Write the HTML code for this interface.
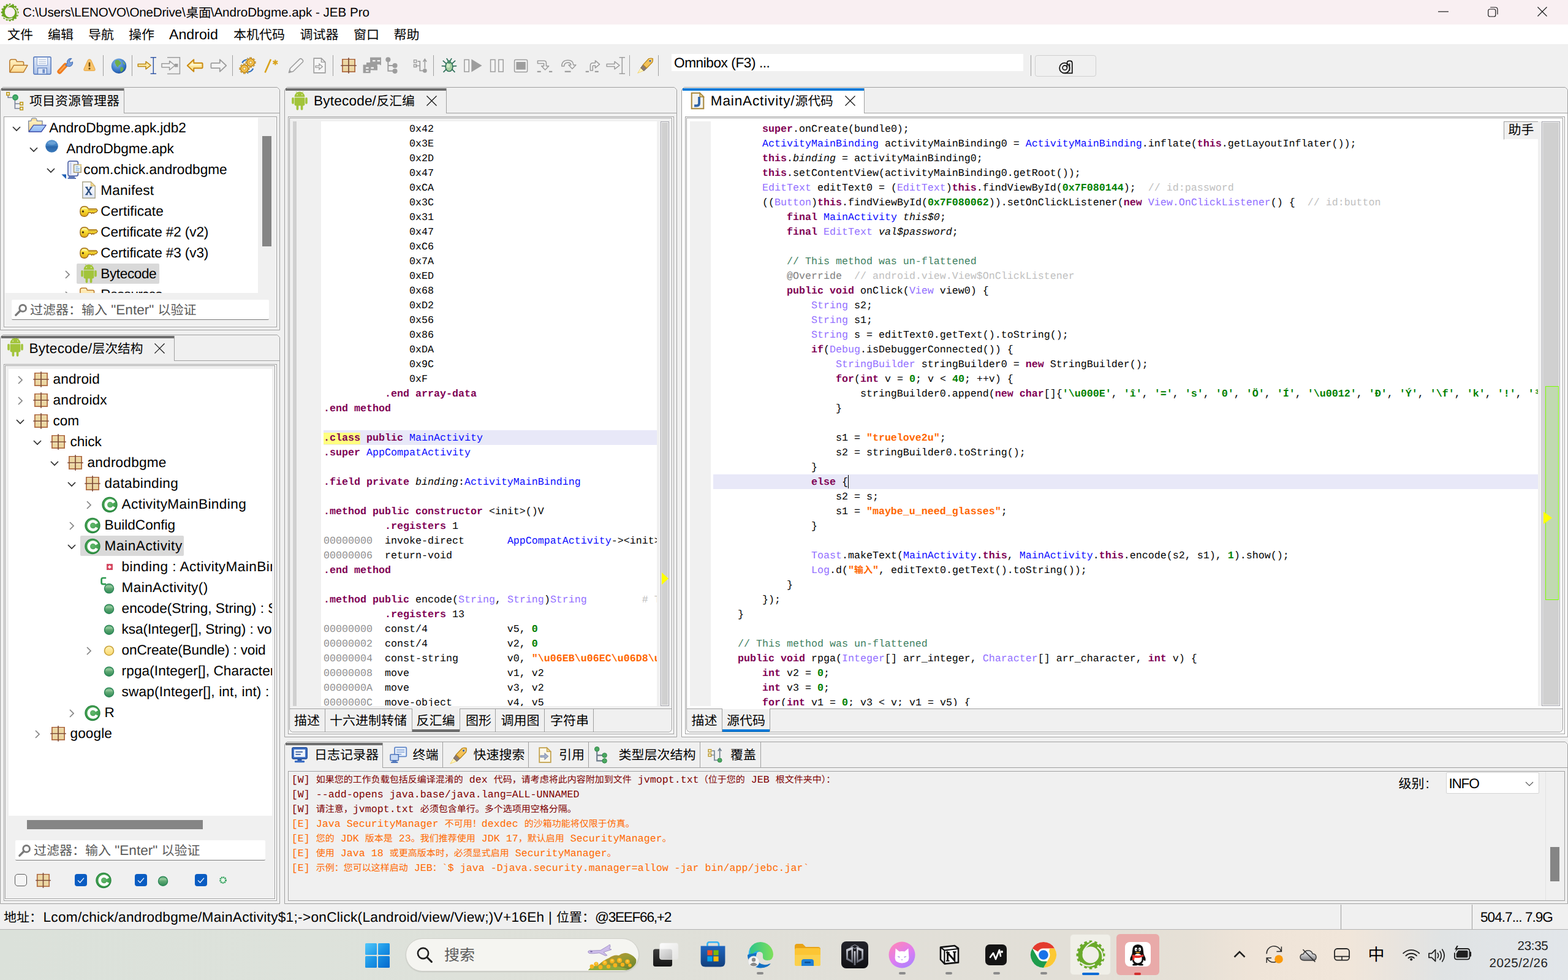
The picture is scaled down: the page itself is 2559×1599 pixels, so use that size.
<!DOCTYPE html>
<html lang="zh"><head><meta charset="utf-8"><title>JEB Pro</title>
<style>
*{box-sizing:border-box;margin:0;padding:0}
html,body{width:2559px;height:1599px;overflow:hidden;background:#f0f0f0}
body{position:relative;text-rendering:geometricPrecision;font-family:"Liberation Sans",sans-serif;font-size:22.6px;color:#000}
div{position:absolute}
svg{position:absolute;overflow:visible}
.u{white-space:nowrap;font-family:"Liberation Sans","Noto Sans CJK SC",sans-serif}
.cj{font-family:"Liberation Sans","Noto Sans CJK SC",sans-serif}
.cj15{font-size:15px;font-family:"Liberation Mono","Noto Sans CJK SC",monospace}
.code{font-family:"Liberation Mono","Noto Sans CJK SC",monospace;font-size:16.67px;line-height:24px;white-space:pre;color:#000;overflow:hidden}
.code div{position:absolute;left:0;height:24px;white-space:pre}
.code b{font-weight:bold}
.k{color:#7f0055;font-weight:bold}
.c{color:#0c0cff}
.t{color:#9370ff}
.n{color:#008000;font-weight:bold}
.s{color:#ff6600;font-weight:bold}
.cm{color:#3f7f5f}
.g{color:#808080}
.lg{color:#c0c0c0}
.a{color:#909090}
.it{font-style:italic}
.w{color:#800000}
.e{color:#ff6a00}

</style></head>
<body>
<!-- title bar -->
<div style="left:0px;top:0px;width:2559px;height:40px;background:#f9eff2"></div>
<svg style="left:1.8px;top:5.8px" width="28.4" height="28.4" viewBox="0 0 16 16" ><rect x="7.2" y="-0.15" width="1.6" height="1.9" fill="#6ba51f" transform="rotate(0.0 8 8)"/><rect x="7.2" y="-0.15" width="1.6" height="1.9" fill="#6ba51f" transform="rotate(22.5 8 8)"/><rect x="7.2" y="-0.15" width="1.6" height="1.9" fill="#6ba51f" transform="rotate(45.0 8 8)"/><rect x="7.2" y="-0.15" width="1.6" height="1.9" fill="#6ba51f" transform="rotate(67.5 8 8)"/><rect x="7.2" y="-0.15" width="1.6" height="1.9" fill="#6ba51f" transform="rotate(90.0 8 8)"/><rect x="7.2" y="-0.15" width="1.6" height="1.9" fill="#6ba51f" transform="rotate(112.5 8 8)"/><rect x="7.2" y="-0.15" width="1.6" height="1.9" fill="#6ba51f" transform="rotate(135.0 8 8)"/><rect x="7.2" y="-0.15" width="1.6" height="1.9" fill="#6ba51f" transform="rotate(157.5 8 8)"/><rect x="7.2" y="-0.15" width="1.6" height="1.9" fill="#6ba51f" transform="rotate(180.0 8 8)"/><rect x="7.2" y="-0.15" width="1.6" height="1.9" fill="#6ba51f" transform="rotate(202.5 8 8)"/><rect x="7.2" y="-0.15" width="1.6" height="1.9" fill="#6ba51f" transform="rotate(225.0 8 8)"/><rect x="7.2" y="-0.15" width="1.6" height="1.9" fill="#6ba51f" transform="rotate(247.5 8 8)"/><rect x="7.2" y="-0.15" width="1.6" height="1.9" fill="#6ba51f" transform="rotate(270.0 8 8)"/><rect x="7.2" y="-0.15" width="1.6" height="1.9" fill="#6ba51f" transform="rotate(292.5 8 8)"/><rect x="7.2" y="-0.15" width="1.6" height="1.9" fill="#6ba51f" transform="rotate(315.0 8 8)"/><rect x="7.2" y="-0.15" width="1.6" height="1.9" fill="#6ba51f" transform="rotate(337.5 8 8)"/><circle cx="8" cy="8" r="5.95" fill="none" stroke="#6ba51f" stroke-width="2.5"/><path d="M9.6 0.6 Q5.2 2.4 3.6 6.6 M14.6 10.6 Q15.4 6 11.8 3.6 M2.4 12.4 Q6.2 15.6 10.4 13.2" fill="none" stroke="#f9eff2" stroke-width="0.75"/></svg>
<div class="u" style="left:37px;top:6.399999999999999px;height:30px;line-height:30px;font-size:20.6px;color:#000;letter-spacing:-0.186px;">C:\Users\LENOVO\OneDrive\</div>
<div class="u" style="left:303.4px;top:6.0px;height:30px;line-height:30px;font-size:22.6px;color:#000;"><span class="cj" style="font-size:20.6px">桌面</span></div>
<div class="u" style="left:343.7px;top:6.399999999999999px;height:30px;line-height:30px;font-size:20.6px;color:#000;letter-spacing:-0.024px;">\AndroDbgme.apk - JEB Pro</div>
<svg style="left:2347px;top:18px" width="17" height="2" viewBox="0 0 17 2" ><path d="M0 1 H17" stroke="#1a1a1a" stroke-width="1.2"/></svg>
<svg style="left:2428px;top:11px" width="17" height="17" viewBox="0 0 17 17" ><rect x="0.8" y="4" width="12" height="12" rx="2.6" fill="none" stroke="#1a1a1a" stroke-width="1.2"/><path d="M4.2 1 H12.4 Q16 1 16 4.6 V12.6" fill="none" stroke="#1a1a1a" stroke-width="1.2"/></svg>
<svg style="left:2509px;top:11px" width="16" height="16" viewBox="0 0 16 16" ><path d="M0.5 0.5 L15.5 15.5 M15.5 0.5 L0.5 15.5" stroke="#1a1a1a" stroke-width="1.2"/></svg>
<!-- menu bar -->
<div style="left:0px;top:40px;width:2559px;height:32px;background:#fff"></div>
<div class="u" style="left:12px;top:41.0px;height:30px;line-height:30px;font-size:23.2px;color:#000;"><span class="cj" style="font-size:21px">文件</span></div>
<div class="u" style="left:78px;top:41.0px;height:30px;line-height:30px;font-size:23.2px;color:#000;"><span class="cj" style="font-size:21px">编辑</span></div>
<div class="u" style="left:144px;top:41.0px;height:30px;line-height:30px;font-size:23.2px;color:#000;"><span class="cj" style="font-size:21px">导航</span></div>
<div class="u" style="left:210px;top:41.0px;height:30px;line-height:30px;font-size:23.2px;color:#000;"><span class="cj" style="font-size:21px">操作</span></div>
<div class="u" style="left:276px;top:41.0px;height:30px;line-height:30px;font-size:23.2px;color:#000;">Android</div>
<div class="u" style="left:381px;top:41.0px;height:30px;line-height:30px;font-size:23.2px;color:#000;"><span class="cj" style="font-size:21px">本机代码</span></div>
<div class="u" style="left:489.5px;top:41.0px;height:30px;line-height:30px;font-size:23.2px;color:#000;"><span class="cj" style="font-size:21px">调试器</span></div>
<div class="u" style="left:577px;top:41.0px;height:30px;line-height:30px;font-size:23.2px;color:#000;"><span class="cj" style="font-size:21px">窗口</span></div>
<div class="u" style="left:642.5px;top:41.0px;height:30px;line-height:30px;font-size:23.2px;color:#000;"><span class="cj" style="font-size:21px">帮助</span></div>
<!-- tool bar -->
<div style="left:0px;top:72px;width:2559px;height:70px;background:#f0f0f0"></div>
<div style="left:168px;top:90px;width:1px;height:34px;background:#a0a0a0"></div>
<div style="left:215px;top:90px;width:1px;height:34px;background:#a0a0a0"></div>
<div style="left:379px;top:90px;width:1px;height:34px;background:#a0a0a0"></div>
<div style="left:543px;top:90px;width:1px;height:34px;background:#a0a0a0"></div>
<div style="left:707px;top:90px;width:1px;height:34px;background:#a0a0a0"></div>
<div style="left:1027px;top:90px;width:1px;height:34px;background:#a0a0a0"></div>
<div style="left:1074px;top:90px;width:1px;height:34px;background:#a0a0a0"></div>
<div style="left:1682px;top:90px;width:1px;height:34px;background:#a0a0a0"></div>
<svg style="left:14.5px;top:96.0px" width="31.0" height="23.0" viewBox="0 0 31 23" ><defs><linearGradient id="gft" x1="0" y1="0" x2="0" y2="1"><stop offset="0" stop-color="#fff1c4"/><stop offset="1" stop-color="#fbd485"/></linearGradient></defs><path d="M0.8 21.6 V4.4 Q0.8 1 4.2 1 H9.6 Q11.6 1 12 3.4 L12.4 4.6 H21.4 Q23.6 4.6 23.6 6.8 V10" fill="url(#gft)" stroke="#b9782a" stroke-width="1.5"/><path d="M1 22 L7.6 10.4 H30 L23.4 22 Z" fill="url(#gft)" stroke="#b9782a" stroke-width="1.5" stroke-linejoin="round"/></svg>
<svg style="left:54px;top:91.5px" width="30" height="30" viewBox="0 0 30 30" ><defs><linearGradient id="gsv" x1="0" y1="0" x2="0" y2="1"><stop offset="0" stop-color="#e4ecf8"/><stop offset="1" stop-color="#a9c0e8"/></linearGradient></defs><rect x="0.9" y="0.9" width="28.2" height="28.2" rx="2" fill="url(#gsv)" stroke="#5d7fbf" stroke-width="1.6"/><rect x="6.4" y="1.6" width="17.2" height="13" fill="#f4f7fc" stroke="#8fa8d6" stroke-width="1.1"/><path d="M9 5.4 H21 M9 8.6 H21 M9 11.6 H21" stroke="#b9c6dc" stroke-width="1.1"/><rect x="7.6" y="19" width="14.8" height="10" fill="#dbe5f6" stroke="#5d7fbf" stroke-width="1.2"/><rect x="15.4" y="20.8" width="3.8" height="6.6" fill="#6f8fcb"/></svg>
<svg style="left:93px;top:93px" width="28" height="28" viewBox="0 0 16 16" ><path d="M2.4 13.6 L7.8 7.8" stroke="#f07c1e" stroke-width="4.4" stroke-linecap="round"/><path d="M2.6 13.4 L7.6 8" stroke="#f9a958" stroke-width="1.2" stroke-linecap="round"/><path d="M8 7.6 L9.6 6 A3.6 3.6 0 0 1 13.6 1.4 L11.4 3.8 L12.6 5.4 L14.6 4.6 A3.6 3.6 0 0 1 9.8 8.6 Z" fill="#7ba1dc" stroke="#4b74b8" stroke-width="0.6"/></svg>
<svg style="left:132px;top:93px" width="28" height="28" viewBox="0 0 16 16" ><path d="M8 2.2 Q9 2.2 9.6 3.4 L13 11 Q13.6 12.8 11.8 12.8 H4.2 Q2.4 12.8 3 11 L6.4 3.4 Q7 2.2 8 2.2 Z" fill="#f9c56c" stroke="#eaae52" stroke-width="0.8"/><path d="M8 5 V9" stroke="#6a4a10" stroke-width="1.5"/><circle cx="8" cy="10.8" r="0.9" fill="#6a4a10"/></svg>
<svg style="left:179.5px;top:93px" width="28" height="28" viewBox="0 0 16 16" ><defs><radialGradient id="gg" cx="0.4" cy="0.3" r="0.8"><stop offset="0" stop-color="#8fc0f0"/><stop offset="0.7" stop-color="#2f6fc0"/><stop offset="1" stop-color="#1a3f86"/></radialGradient></defs><circle cx="8" cy="8.4" r="7" fill="url(#gg)"/><path d="M5 3 Q8 2 9 4.4 Q10.8 5.2 9.4 7 Q7.6 7.6 7.4 9.4 Q5.4 9 5 6.8 Q3.6 5.2 5 3 Z" fill="#6fae4a"/><path d="M9.6 9.4 Q12 9 12.4 10.8 Q11.6 13.4 9.8 14 Q8.8 12 9.6 9.4 Z" fill="#6fae4a"/><path d="M11.6 4 Q13.8 5.4 13.8 7.4 Q12.2 7 11.6 4 Z" fill="#7fb85a"/></svg>
<svg style="left:224px;top:92.5px" width="32" height="28" viewBox="0 0 32 28" ><path d="M1.2 11.6 H14 V7.4 L22 13.6 L14 19.8 V15.6 H1.2 Z" fill="#fdeaa6" stroke="#bd8a14" stroke-width="1.5" stroke-linejoin="round"/><path d="M21.6 0.8 H31 M26.3 0.8 V27.2 M21.6 27.2 H31" stroke="#3458a6" stroke-width="1.5" fill="none"/></svg>
<svg style="left:262.5px;top:92.6px" width="32" height="29" viewBox="0 0 32 29" ><path d="M10 0.8 H30.4 V27.6 H10" fill="none" stroke="#9d9d9d" stroke-width="1.5"/><path d="M1 10.8 H13.6 V6.4 L22.4 13.8 L13.6 21.2 V16.8 H1 Z" fill="#f2f2f2" stroke="#9d9d9d" stroke-width="1.5" stroke-linejoin="round"/><rect x="22" y="11" width="5.4" height="5.4" fill="#9d9d9d"/></svg>
<svg style="left:304px;top:93px" width="28" height="28" viewBox="0 0 16 16" ><path d="M1 8 L7 2.4 V5.6 H14.4 Q15.2 5.6 15.2 6.6 V9.4 Q15.2 10.4 14.4 10.4 H7 V13.6 Z" fill="#fde59a" stroke="#c98a12" stroke-width="1.1" stroke-linejoin="round"/><path d="M3 8 L6.4 4.8 V6.6 H14 V8 Z" fill="#fff6d0"/></svg>
<svg style="left:343px;top:93px" width="28" height="28" viewBox="0 0 16 16" ><path d="M15 8 L9 2.4 V5.6 H1.6 Q0.8 5.6 0.8 6.6 V9.4 Q0.8 10.4 1.6 10.4 H9 V13.6 Z" fill="#f3f3f3" stroke="#9d9d9d" stroke-width="1" stroke-linejoin="round"/></svg>
<svg style="left:390px;top:93px" width="28" height="28" viewBox="0 0 16 16" ><path d="M2.4 5.2 A6.4 6.4 0 0 1 8 1.8 L7.6 0.6 L10.4 2.4 L7.8 4.2 L7.8 3 A5 5 0 0 0 3.6 5.8 Z" fill="#2f6fc0"/><path d="M13.8 11 A6.4 6.4 0 0 1 8.4 14.6 L8.8 15.8 L6 14 L8.6 12.2 L8.6 13.4 A5 5 0 0 0 12.6 10.4 Z" fill="#2f6fc0"/><rect x="10.0" y="0.49999999999999956" width="1.8" height="2.2" fill="#f6c04a" stroke="#a9781a" stroke-width="0.4" transform="rotate(0 10.9 5.1)"/><rect x="10.0" y="0.49999999999999956" width="1.8" height="2.2" fill="#f6c04a" stroke="#a9781a" stroke-width="0.4" transform="rotate(45 10.9 5.1)"/><rect x="10.0" y="0.49999999999999956" width="1.8" height="2.2" fill="#f6c04a" stroke="#a9781a" stroke-width="0.4" transform="rotate(90 10.9 5.1)"/><rect x="10.0" y="0.49999999999999956" width="1.8" height="2.2" fill="#f6c04a" stroke="#a9781a" stroke-width="0.4" transform="rotate(135 10.9 5.1)"/><rect x="10.0" y="0.49999999999999956" width="1.8" height="2.2" fill="#f6c04a" stroke="#a9781a" stroke-width="0.4" transform="rotate(180 10.9 5.1)"/><rect x="10.0" y="0.49999999999999956" width="1.8" height="2.2" fill="#f6c04a" stroke="#a9781a" stroke-width="0.4" transform="rotate(225 10.9 5.1)"/><rect x="10.0" y="0.49999999999999956" width="1.8" height="2.2" fill="#f6c04a" stroke="#a9781a" stroke-width="0.4" transform="rotate(270 10.9 5.1)"/><rect x="10.0" y="0.49999999999999956" width="1.8" height="2.2" fill="#f6c04a" stroke="#a9781a" stroke-width="0.4" transform="rotate(315 10.9 5.1)"/><circle cx="10.9" cy="5.1" r="3.5" fill="#f6c04a" stroke="#a9781a" stroke-width="0.6"/><circle cx="10.9" cy="5.1" r="1.26" fill="#fff4c8" stroke="#a9781a" stroke-width="0.4"/><rect x="4.199999999999999" y="6.300000000000001" width="1.8" height="2.2" fill="#f6c04a" stroke="#a9781a" stroke-width="0.4" transform="rotate(0 5.1 10.9)"/><rect x="4.199999999999999" y="6.300000000000001" width="1.8" height="2.2" fill="#f6c04a" stroke="#a9781a" stroke-width="0.4" transform="rotate(45 5.1 10.9)"/><rect x="4.199999999999999" y="6.300000000000001" width="1.8" height="2.2" fill="#f6c04a" stroke="#a9781a" stroke-width="0.4" transform="rotate(90 5.1 10.9)"/><rect x="4.199999999999999" y="6.300000000000001" width="1.8" height="2.2" fill="#f6c04a" stroke="#a9781a" stroke-width="0.4" transform="rotate(135 5.1 10.9)"/><rect x="4.199999999999999" y="6.300000000000001" width="1.8" height="2.2" fill="#f6c04a" stroke="#a9781a" stroke-width="0.4" transform="rotate(180 5.1 10.9)"/><rect x="4.199999999999999" y="6.300000000000001" width="1.8" height="2.2" fill="#f6c04a" stroke="#a9781a" stroke-width="0.4" transform="rotate(225 5.1 10.9)"/><rect x="4.199999999999999" y="6.300000000000001" width="1.8" height="2.2" fill="#f6c04a" stroke="#a9781a" stroke-width="0.4" transform="rotate(270 5.1 10.9)"/><rect x="4.199999999999999" y="6.300000000000001" width="1.8" height="2.2" fill="#f6c04a" stroke="#a9781a" stroke-width="0.4" transform="rotate(315 5.1 10.9)"/><circle cx="5.1" cy="10.9" r="3.5" fill="#f6c04a" stroke="#a9781a" stroke-width="0.6"/><circle cx="5.1" cy="10.9" r="1.26" fill="#fff4c8" stroke="#a9781a" stroke-width="0.4"/></svg>
<svg style="left:429px;top:93px" width="28" height="28" viewBox="0 0 16 16" ><path d="M2 14.6 L7.4 2.2" stroke="#d9a21a" stroke-width="1.5"/><path d="M11.6 2.6 V7.6 M9.4 3.8 L13.8 6.4 M13.8 3.8 L9.4 6.4" stroke="#d9a21a" stroke-width="1.2"/></svg>
<svg style="left:468.5px;top:93px" width="28" height="28" viewBox="0 0 16 16" ><path d="M1.4 14.6 L2.6 10.6 L11.6 1.8 Q12.4 1.2 13.2 1.8 L14.4 3 Q15 3.8 14.4 4.6 L5.4 13.4 Z" fill="#f4f4f4" stroke="#9d9d9d" stroke-width="0.9" stroke-linejoin="round"/><path d="M1.4 14.6 L2.2 12 L4 13.8 Z" fill="#9d9d9d"/></svg>
<svg style="left:507px;top:93px" width="28" height="28" viewBox="0 0 16 16" ><path d="M3 1.2 H10 L13.6 4.8 V14.8 H3 Z" fill="#f6f6f6" stroke="#9d9d9d" stroke-width="0.9"/><path d="M10 1.2 V4.8 H13.6" fill="none" stroke="#9d9d9d" stroke-width="0.8"/><path d="M4.6 8.2 H8 V6.4 L11 9 L8 11.6 V9.8 H4.6 Z" fill="#f6f6f6" stroke="#9d9d9d" stroke-width="0.8"/></svg>
<svg style="left:555.5px;top:94px" width="26" height="26" viewBox="0 0 26 26" ><rect x="2.9" y="2.9" width="20.2" height="20.2" fill="#ecd7a2" stroke="#b06e46" stroke-width="1.8"/><path d="M4.4 4.4 H21.6 M4.4 14.6 H21.6" stroke="#f6e8c0" stroke-width="1.2"/><path d="M13 0.2 V25.8 M0.2 13 H25.8" stroke="#7e4c38" stroke-width="1.7"/></svg>
<svg style="left:591.5px;top:92px" width="31" height="28" viewBox="0 0 31 28" ><g fill="#9d9d9d"><rect x="12" y="1.6" width="18" height="12.6"/><rect x="6" y="10" width="18" height="12.6"/><rect x="0.6" y="13.6" width="12" height="13.6"/></g><g fill="#f0f0f0"><rect x="16" y="6" width="4.6" height="2.4"/><rect x="23.6" y="6" width="4.6" height="2.4"/><rect x="23.6" y="13.2" width="4.6" height="2.4"/><rect x="5" y="17.6" width="4.6" height="2.4"/><rect x="13.4" y="17.6" width="4.6" height="2.4"/><rect x="5" y="22.6" width="4.6" height="2.4"/><rect x="13.4" y="22.6" width="2.6" height="2.4"/></g></svg>
<svg style="left:626px;top:93px" width="28" height="28" viewBox="0 0 16 16" ><path d="M4.2 3 V13 H9 M4.2 8 H9" fill="none" stroke="#9d9d9d" stroke-width="1.1"/><circle cx="4.2" cy="2.4" r="2.3" fill="#9d9d9d"/><circle cx="10.6" cy="8" r="2.3" fill="#9d9d9d"/><circle cx="10.6" cy="13.2" r="2.3" fill="#9d9d9d"/></svg>
<svg style="left:672px;top:93px" width="28" height="28" viewBox="0 0 16 16" ><path d="M5.4 4 H7.6 V12.8 H11" fill="none" stroke="#9d9d9d" stroke-width="1"/><rect x="2" y="2.8" width="2.4" height="2.4" fill="#f0f0f0" stroke="#9d9d9d" stroke-width="0.8"/><rect x="2" y="7" width="2.4" height="2.4" fill="#f0f0f0" stroke="#9d9d9d" stroke-width="0.8"/><path d="M3.4 8.2 H7.6" stroke="#9d9d9d" stroke-width="0.8"/><path d="M12.2 2.8 V10.6 M10.6 4.4 L12.2 2 L13.8 4.4" fill="none" stroke="#9d9d9d" stroke-width="0.9"/><circle cx="12.2" cy="12.8" r="1.9" fill="#9d9d9d"/></svg>
<svg style="left:718.5px;top:93px" width="28" height="28" viewBox="0 0 16 16" ><path d="M8 8.6 L2.2 3.4 M8 8.6 L13.8 3.4 M8 8.6 L1 8.4 M8 8.6 L15 8.4 M8 8.6 L2.6 14.2 M8 8.6 L13.4 14.2 M8 5 L5.6 1.2 M8 5 L10.4 1.2" stroke="#2f6f5a" stroke-width="1"/><ellipse cx="8" cy="9" rx="3.4" ry="4.4" fill="#a6cfa0" stroke="#2f6f5a" stroke-width="0.9"/><ellipse cx="7.2" cy="7.8" rx="1.6" ry="2.2" fill="#d8efd0" opacity="0.8"/><circle cx="8" cy="4.6" r="1.6" fill="#4a8a6a"/></svg>
<svg style="left:757px;top:93px" width="30" height="28" viewBox="0 0 30 28" ><rect x="0.9" y="4.4" width="7.4" height="19.6" fill="#f4f4f4" stroke="#9d9d9d" stroke-width="1.5"/><path d="M12.4 3.6 L29.6 14 L12.4 24.4 Z" fill="#9d9d9d"/></svg>
<svg style="left:797px;top:93px" width="28" height="28" viewBox="0 0 28 28" ><rect x="3.6" y="4.4" width="7.4" height="19.6" fill="#f4f4f4" stroke="#9d9d9d" stroke-width="1.5"/><rect x="16.8" y="4.4" width="7.4" height="19.6" fill="#f4f4f4" stroke="#9d9d9d" stroke-width="1.5"/></svg>
<svg style="left:836px;top:93px" width="28" height="28" viewBox="0 0 28 28" ><rect x="3.6" y="4.4" width="21" height="20" rx="2" fill="#f4f4f4" stroke="#9d9d9d" stroke-width="1.5"/><rect x="6.4" y="8" width="15.4" height="12.6" fill="#9d9d9d"/></svg>
<svg style="left:875px;top:93px" width="28" height="28" viewBox="0 0 16 16" ><path d="M1.4 3.6 H7.4 Q9.4 3.6 9.4 5.6 V8.4 H11.8 L8.4 12 L5 8.4 H7.2 V6 H1.4 Z" fill="#f4f4f4" stroke="#9d9d9d" stroke-width="0.9" stroke-linejoin="round"/><path d="M1 13.6 H4.4 M12 13.6 H15" stroke="#9d9d9d" stroke-width="1.3"/></svg>
<svg style="left:914px;top:93px" width="28" height="28" viewBox="0 0 16 16" ><path d="M1.6 8.6 Q1.6 3 7.4 3 Q12.2 3 12.4 7.4 H14.8 L11.4 11 L8 7.4 H10.2 Q10 5.2 7.4 5.2 Q3.8 5.2 3.8 8.6 Z" fill="#f4f4f4" stroke="#9d9d9d" stroke-width="0.9" stroke-linejoin="round"/><path d="M4.4 13.6 H10" stroke="#9d9d9d" stroke-width="1.3"/></svg>
<svg style="left:953.5px;top:93px" width="28" height="28" viewBox="0 0 16 16" ><path d="M5.4 12.6 V8 Q5.4 5.6 7.8 5.6 H10 V3.4 L14 6.8 L10 10.2 V8 H8.2 Q7.6 8 7.6 8.6 V12.6 Z" fill="#f4f4f4" stroke="#9d9d9d" stroke-width="0.9" stroke-linejoin="round"/><path d="M1 13.6 H4 M9.6 13.6 H13" stroke="#9d9d9d" stroke-width="1.3"/></svg>
<svg style="left:989px;top:92.5px" width="32" height="28" viewBox="0 0 32 28" ><path d="M1.2 11.6 H14 V7.4 L22 13.6 L14 19.8 V15.6 H1.2 Z" fill="#f4f4f4" stroke="#9d9d9d" stroke-width="1.5" stroke-linejoin="round"/><path d="M21.6 0.8 H31 M26.3 0.8 V27.2 M21.6 27.2 H31" stroke="#9d9d9d" stroke-width="1.5" fill="none"/></svg>
<svg style="left:1038.5px;top:93px" width="28" height="28" viewBox="0 0 16 16" ><path d="M1 15 L4.4 9.6 L7.4 12.4 Z" fill="#fff6c0" stroke="#f0d060" stroke-width="0.5"/><path d="M3.8 10.2 L6 7.2 L9.4 10.4 L6.8 13 Z" fill="#8a7a72" stroke="#6a5a52" stroke-width="0.5"/><path d="M6 7.2 L11.2 1.6 Q13.4 0.8 15 1.4 Q15.4 3.4 14.6 5 L9.4 10.4 Z" fill="#f3c25a" stroke="#b8861a" stroke-width="0.7"/><path d="M12 2.2 L14 4.2" stroke="#fbe6a8" stroke-width="1.2"/><circle cx="12.6" cy="3.6" r="0.9" fill="#3a62b0"/></svg>
<div style="left:1096px;top:88px;width:574px;height:28px;background:#fff"></div>
<div class="u" style="left:1100px;top:88.6px;height:28px;line-height:28px;font-size:22.6px;color:#000;letter-spacing:-0.422px;">Omnibox (F3) ...</div>
<div style="left:1689px;top:90px;width:100px;height:35px;background:#f0f0f0;border:1px solid #d0d0d0;border-radius:4px"></div>
<svg style="left:1727.5px;top:97.5px" width="23" height="23" viewBox="0 0 23 23" ><circle cx="9.4" cy="13" r="8.3" fill="none" stroke="#111" stroke-width="1.7"/><circle cx="9.8" cy="12.6" r="3.7" fill="none" stroke="#111" stroke-width="1.6"/><path d="M13.5 12.6 V5 Q13.5 1.4 17 1.4 H18.6 Q21.8 1.4 21.8 4.8 V21.4 H9.4" fill="none" stroke="#111" stroke-width="1.7"/><path d="M17.6 5.4 V17.4" stroke="#111" stroke-width="1.5"/></svg>
<!-- project explorer -->
<svg style="left:0px;top:142px" width="457" height="397" viewBox="0 0 457 397" shape-rendering="geometricPrecision"><path d="M0.5 396.5 V4.5 L4.5 0.5 H452.5 L456.5 4.5 V396.5 Z" fill="none" stroke="#a0a0a0" stroke-width="1"/></svg><div style="left:2px;top:144px;width:201px;height:4px;background:#6d6d6d"></div><div style="left:202px;top:144px;width:1px;height:41px;background:#a0a0a0"></div><div style="left:202px;top:184px;width:254px;height:1px;background:#a0a0a0"></div>
<svg style="left:10px;top:150px" width="28" height="30" viewBox="0 0 28 30" ><path d="M3.2 6 V9.2 H10 M14.4 13 V27 H22 M14.4 19.2 H22" fill="none" stroke="#7a839a" stroke-width="1.6"/><rect x="0.9" y="0.9" width="4.4" height="4.4" fill="#fffdf0" stroke="#c2a02e" stroke-width="1.8"/><rect x="22.9" y="16.9" width="4.4" height="4.4" fill="#fffdf0" stroke="#c2a02e" stroke-width="1.8"/><rect x="22.9" y="24.9" width="4.4" height="4.4" fill="#fffdf0" stroke="#c2a02e" stroke-width="1.8"/><circle cx="15" cy="9" r="4.9" fill="#2f9a58"/><circle cx="15" cy="9" r="3" fill="#4aae6c"/></svg>
<div class="u" style="left:48px;top:150.0px;height:30px;line-height:30px;font-size:22.6px;color:#000;"><span class="cj" style="font-size:21px">项目资源管理器</span></div>
<div style="left:6px;top:190px;width:446px;height:344px;border:1px solid #a0a0a0;background:#f0f0f0;box-shadow:inset 0 0 0 1px #fff"></div>
<div style="left:7px;top:192px;width:414px;height:286px;background:#fff;overflow:hidden"><svg style="left:12.600000000000001px;top:13.7px" width="14" height="8" viewBox="0 0 14 8" ><path d="M1 1 L7 7 L13 1" fill="none" stroke="#2c2c2c" stroke-width="1.7"/></svg><svg style="left:39px;top:0.2999999999999998px" width="30" height="24" viewBox="0 0 30 24" ><defs><linearGradient id="gfo" x1="0" y1="0" x2="0" y2="1"><stop offset="0" stop-color="#fff6cf"/><stop offset="1" stop-color="#fbd78a"/></linearGradient><linearGradient id="gfb" x1="0" y1="0" x2="0" y2="1"><stop offset="0" stop-color="#b4d4fb"/><stop offset="1" stop-color="#8fb8f2"/></linearGradient></defs><path d="M0.7 22.6 V5.4 H4.6 L5.4 2.8 Q5.6 0.8 7.6 0.8 H11.8 Q13.6 0.8 13.8 2.8 L14.4 5.4 H23 V11.6" fill="url(#gfo)" stroke="#76829c" stroke-width="1.3"/><path d="M5.6 3.4 H13.6" stroke="#f6d27a" stroke-width="1.6"/><path d="M1 23 L8.8 12.2 H29.2 L21.4 23 Z" fill="url(#gfb)" stroke="#3a4aa8" stroke-width="1.3" stroke-linejoin="round"/></svg><div class="u" style="left:73.3px;top:1.5px;height:30px;line-height:30px;font-size:22.6px;color:#000;letter-spacing:-0.073px;">AndroDbgme.apk.jdb2</div><svg style="left:40.6px;top:47.7px" width="14" height="8" viewBox="0 0 14 8" ><path d="M1 1 L7 7 L13 1" fill="none" stroke="#2c2c2c" stroke-width="1.7"/></svg><svg style="left:66.6px;top:36.1px" width="21" height="21" viewBox="0 0 21 21" ><defs><linearGradient id="gs" x1="0" y1="0" x2="0" y2="1"><stop offset="0" stop-color="#5b96cf"/><stop offset="0.45" stop-color="#3f7fc0"/><stop offset="0.55" stop-color="#2b67aa"/><stop offset="1" stop-color="#3a79bb"/></linearGradient></defs><circle cx="10.5" cy="10.5" r="10.3" fill="url(#gs)"/><ellipse cx="10.5" cy="5.4" rx="6.6" ry="3" fill="#8fbde6" opacity="0.45"/></svg><div class="u" style="left:101.3px;top:35.5px;height:30px;line-height:30px;font-size:22.6px;color:#000;letter-spacing:-0.027px;">AndroDbgme.apk</div><svg style="left:68.6px;top:81.7px" width="14" height="8" viewBox="0 0 14 8" ><path d="M1 1 L7 7 L13 1" fill="none" stroke="#2c2c2c" stroke-width="1.7"/></svg><svg style="left:93px;top:70.0px" width="33" height="31" viewBox="0 0 33 31" ><rect x="11" y="0.8" width="16.4" height="24.4" rx="3" fill="#eef1fa" stroke="#5468a8" stroke-width="1.7"/><rect x="13.6" y="3.2" width="3" height="19.6" fill="#c9d3ee"/><path d="M12 25.4 H22 V28 H24 V30 H10.6 V28 H12 Z" fill="#5f78b8"/><path d="M0.4 22.4 H8 V30 Z" fill="#1f5fb4"/><rect x="20.6" y="6.6" width="11.6" height="12.6" fill="#e9f6fb" stroke="#a9976c" stroke-width="1.5"/><path d="M28 6.2 H32.6 V10.4 Z" fill="#f1d88e"/><path d="M23.6 10.4 H27.6 M23.6 13.4 H30 M23.6 16.2 H29" stroke="#7fa8d8" stroke-width="1.3"/></svg><div class="u" style="left:129.3px;top:69.5px;height:30px;line-height:30px;font-size:22.6px;color:#000;letter-spacing:0.042px;">com.chick.androdbgme</div><svg style="left:127px;top:103.9px" width="22" height="28" viewBox="0 0 22 28" ><defs><linearGradient id="gmf" x1="0" y1="0" x2="0" y2="1"><stop offset="0" stop-color="#ffffff"/><stop offset="1" stop-color="#dfe6f6"/></linearGradient></defs><path d="M0.8 0.8 H14.4 L21.2 7.6 V27.2 H0.8 Z" fill="url(#gmf)" stroke="#a8a48a" stroke-width="1.4"/><path d="M14.4 0.8 V7.6 H21.2 Z" fill="#f0d890" stroke="#c8ac60" stroke-width="0.9"/><path d="M7 9.6 L14.6 21.4 M14.6 9.6 L7 21.4" stroke="#2d4f80" stroke-width="2.3"/><path d="M5.2 9.6 H9.4 M12.4 9.6 H16.4 M5.2 21.4 H9.4 M12.4 21.4 H16.4" stroke="#2d4f80" stroke-width="1.5"/></svg><div class="u" style="left:157.3px;top:103.5px;height:30px;line-height:30px;font-size:22.6px;color:#000;letter-spacing:0.198px;">Manifest</div><svg style="left:123.2px;top:144.1px" width="30" height="18" viewBox="0 0 30 18" ><defs><linearGradient id="gky" x1="0" y1="0" x2="0" y2="1"><stop offset="0" stop-color="#fff27a"/><stop offset="0.5" stop-color="#f7d92c"/><stop offset="1" stop-color="#e0a81a"/></linearGradient></defs><path d="M7.6 0.8 Q12.6 0.8 14.2 4.6 H27 L29.2 7.4 L26.8 10.4 H24.6 L23 12.4 L21.4 10.4 L19.8 12.6 L18.2 10.8 H14.4 Q13 17.2 7.6 17.2 Q0.8 17.2 0.8 9 Q0.8 0.8 7.6 0.8 Z" fill="url(#gky)" stroke="#a06c1a" stroke-width="1.4" stroke-linejoin="round"/><path d="M14 6.6 H26.6" stroke="#b98a2a" stroke-width="1.2"/><circle cx="5.4" cy="9" r="1.7" fill="#4a3010"/><path d="M4 4.4 Q8 2.4 11.4 5" stroke="#fffbd0" stroke-width="1.2" fill="none"/></svg><div class="u" style="left:157.3px;top:137.5px;height:30px;line-height:30px;font-size:22.6px;color:#000;letter-spacing:0.07px;">Certificate</div><svg style="left:123.2px;top:178.1px" width="30" height="18" viewBox="0 0 30 18" ><defs><linearGradient id="gky" x1="0" y1="0" x2="0" y2="1"><stop offset="0" stop-color="#fff27a"/><stop offset="0.5" stop-color="#f7d92c"/><stop offset="1" stop-color="#e0a81a"/></linearGradient></defs><path d="M7.6 0.8 Q12.6 0.8 14.2 4.6 H27 L29.2 7.4 L26.8 10.4 H24.6 L23 12.4 L21.4 10.4 L19.8 12.6 L18.2 10.8 H14.4 Q13 17.2 7.6 17.2 Q0.8 17.2 0.8 9 Q0.8 0.8 7.6 0.8 Z" fill="url(#gky)" stroke="#a06c1a" stroke-width="1.4" stroke-linejoin="round"/><path d="M14 6.6 H26.6" stroke="#b98a2a" stroke-width="1.2"/><circle cx="5.4" cy="9" r="1.7" fill="#4a3010"/><path d="M4 4.4 Q8 2.4 11.4 5" stroke="#fffbd0" stroke-width="1.2" fill="none"/></svg><div class="u" style="left:157.3px;top:171.5px;height:30px;line-height:30px;font-size:22.6px;color:#000;letter-spacing:-0.124px;">Certificate #2 (v2)</div><svg style="left:123.2px;top:212.1px" width="30" height="18" viewBox="0 0 30 18" ><defs><linearGradient id="gky" x1="0" y1="0" x2="0" y2="1"><stop offset="0" stop-color="#fff27a"/><stop offset="0.5" stop-color="#f7d92c"/><stop offset="1" stop-color="#e0a81a"/></linearGradient></defs><path d="M7.6 0.8 Q12.6 0.8 14.2 4.6 H27 L29.2 7.4 L26.8 10.4 H24.6 L23 12.4 L21.4 10.4 L19.8 12.6 L18.2 10.8 H14.4 Q13 17.2 7.6 17.2 Q0.8 17.2 0.8 9 Q0.8 0.8 7.6 0.8 Z" fill="url(#gky)" stroke="#a06c1a" stroke-width="1.4" stroke-linejoin="round"/><path d="M14 6.6 H26.6" stroke="#b98a2a" stroke-width="1.2"/><circle cx="5.4" cy="9" r="1.7" fill="#4a3010"/><path d="M4 4.4 Q8 2.4 11.4 5" stroke="#fffbd0" stroke-width="1.2" fill="none"/></svg><div class="u" style="left:157.3px;top:205.5px;height:30px;line-height:30px;font-size:22.6px;color:#000;letter-spacing:-0.124px;">Certificate #3 (v3)</div><div style="left:118px;top:237.5px;width:135px;height:33.4px;background:#d9d9d9;border-radius:2px"></div><svg style="left:98.8px;top:248.5px" width="8" height="14" viewBox="0 0 8 14" ><path d="M1 1 L7 7 L1 13" fill="none" stroke="#828282" stroke-width="1.7"/></svg><svg style="left:124.7px;top:238.7px" width="26.0" height="31.0" viewBox="0 0 26 31" ><g fill="#a2c43a"><path d="M4.6 9.2 A8.4 8.6 0 0 1 21.4 9.2 Z"/><path d="M4.6 10.2 H21.4 V21.6 Q21.4 23.4 19.6 23.4 H6.4 Q4.6 23.4 4.6 21.6 Z"/><rect x="0.2" y="10" width="3.6" height="10.8" rx="1.8"/><rect x="22.2" y="10" width="3.6" height="10.8" rx="1.8"/><rect x="7.6" y="21" width="3.7" height="9.8" rx="1.8"/><rect x="14.7" y="21" width="3.7" height="9.8" rx="1.8"/></g><path d="M7.4 0.6 L9 3 M18.6 0.6 L17 3" stroke="#a2c43a" stroke-width="0.9" stroke-linecap="round"/><circle cx="9.2" cy="5.4" r="0.9" fill="#e4efc0"/><circle cx="16.8" cy="5.4" r="0.9" fill="#e4efc0"/></svg><div class="u" style="left:157.3px;top:239.5px;height:30px;line-height:30px;font-size:22.6px;color:#000;letter-spacing:-0.404px;">Bytecode</div><svg style="left:98.8px;top:282.5px" width="8" height="14" viewBox="0 0 8 14" ><path d="M1 1 L7 7 L1 13" fill="none" stroke="#828282" stroke-width="1.7"/></svg><svg style="left:123.0px;top:276.5px" width="31.0" height="23.0" viewBox="0 0 31 23" ><defs><linearGradient id="gft" x1="0" y1="0" x2="0" y2="1"><stop offset="0" stop-color="#fff1c4"/><stop offset="1" stop-color="#fbd485"/></linearGradient></defs><path d="M0.8 21.6 V4.4 Q0.8 1 4.2 1 H9.6 Q11.6 1 12 3.4 L12.4 4.6 H21.4 Q23.6 4.6 23.6 6.8 V10" fill="url(#gft)" stroke="#b9782a" stroke-width="1.5"/><path d="M1 22 L7.6 10.4 H30 L23.4 22 Z" fill="url(#gft)" stroke="#b9782a" stroke-width="1.5" stroke-linejoin="round"/></svg><div class="u" style="left:157.3px;top:273.5px;height:30px;line-height:30px;font-size:22.6px;color:#000;letter-spacing:-0.892px;">Resources</div></div>
<div style="left:428px;top:222px;width:15px;height:180px;background:#858585"></div>
<div style="left:19px;top:489px;width:420px;height:33px;background:#fff;border-bottom:1px solid #7a7a7a;border-radius:2px"></div>
<svg style="left:23.5px;top:494.5px" width="21" height="21" viewBox="0 0 16 16" ><circle cx="10" cy="6" r="4.1" fill="none" stroke="#7a7a7a" stroke-width="2.2"/><path d="M7 9 L1.4 14.6" stroke="#7a7a7a" stroke-width="2.6" stroke-linecap="round"/></svg>
<div class="u" style="left:49px;top:490.5px;height:30px;line-height:30px;font-size:22.6px;color:#5a5a5a;"><span class="cj" style="font-size:21px">过滤器：输入</span> "Enter" <span class="cj" style="font-size:21px">以验证</span></div>
<!-- hierarchy -->
<svg style="left:0px;top:546px" width="457" height="929" viewBox="0 0 457 929" shape-rendering="geometricPrecision"><path d="M0.5 928.5 V4.5 L4.5 0.5 H452.5 L456.5 4.5 V928.5 Z" fill="none" stroke="#a0a0a0" stroke-width="1"/></svg><div style="left:2px;top:548px;width:283px;height:4px;background:#6d6d6d"></div><div style="left:284px;top:548px;width:1px;height:41px;background:#a0a0a0"></div><div style="left:284px;top:588px;width:172px;height:1px;background:#a0a0a0"></div>
<svg style="left:11.5px;top:551px" width="26.0" height="31.0" viewBox="0 0 26 31" ><g fill="#a2c43a"><path d="M4.6 9.2 A8.4 8.6 0 0 1 21.4 9.2 Z"/><path d="M4.6 10.2 H21.4 V21.6 Q21.4 23.4 19.6 23.4 H6.4 Q4.6 23.4 4.6 21.6 Z"/><rect x="0.2" y="10" width="3.6" height="10.8" rx="1.8"/><rect x="22.2" y="10" width="3.6" height="10.8" rx="1.8"/><rect x="7.6" y="21" width="3.7" height="9.8" rx="1.8"/><rect x="14.7" y="21" width="3.7" height="9.8" rx="1.8"/></g><path d="M7.4 0.6 L9 3 M18.6 0.6 L17 3" stroke="#a2c43a" stroke-width="0.9" stroke-linecap="round"/><circle cx="9.2" cy="5.4" r="0.9" fill="#e4efc0"/><circle cx="16.8" cy="5.4" r="0.9" fill="#e4efc0"/></svg>
<div class="u" style="left:47.4px;top:554.0px;height:30px;line-height:30px;font-size:22.6px;color:#000;letter-spacing:0.277px;">Bytecode/</div>
<div class="u" style="left:150.7px;top:554.0px;height:30px;line-height:30px;font-size:22.6px;color:#000;"><span class="cj" style="font-size:20.7px">层次结构</span></div>
<svg style="left:251.5px;top:559.5px" width="17.0" height="17.0" viewBox="0 0 17.0 17.0" ><path d="M0.5 0.5 L16.5 16.5 M16.5 0.5 L0.5 16.5" stroke="#101010" stroke-width="1.15"/></svg>
<div style="left:6px;top:594px;width:446px;height:876px;border:1px solid #a0a0a0;background:#fff;"></div>
<div style="left:8px;top:596px;width:441px;height:871px;border:1px solid #a0a0a0;background:#f0f0f0;"></div>
<div style="left:14px;top:602px;width:430px;height:729px;background:#fff;overflow:hidden"><svg style="left:14.599999999999998px;top:11px" width="8" height="14" viewBox="0 0 8 14" ><path d="M1 1 L7 7 L1 13" fill="none" stroke="#828282" stroke-width="1.7"/></svg><svg style="left:40px;top:3.8px" width="26" height="26" viewBox="0 0 26 26" ><rect x="2.9" y="2.9" width="20.2" height="20.2" fill="#ecd7a2" stroke="#b06e46" stroke-width="1.8"/><path d="M4.4 4.4 H21.6 M4.4 14.6 H21.6" stroke="#f6e8c0" stroke-width="1.2"/><path d="M13 0.2 V25.8 M0.2 13 H25.8" stroke="#7e4c38" stroke-width="1.7"/></svg><div class="u" style="left:72.6px;top:2.0px;height:30px;line-height:30px;font-size:22.6px;color:#000;letter-spacing:0.143px;">android</div><svg style="left:14.599999999999998px;top:45px" width="8" height="14" viewBox="0 0 8 14" ><path d="M1 1 L7 7 L1 13" fill="none" stroke="#828282" stroke-width="1.7"/></svg><svg style="left:40px;top:37.8px" width="26" height="26" viewBox="0 0 26 26" ><rect x="2.9" y="2.9" width="20.2" height="20.2" fill="#ecd7a2" stroke="#b06e46" stroke-width="1.8"/><path d="M4.4 4.4 H21.6 M4.4 14.6 H21.6" stroke="#f6e8c0" stroke-width="1.2"/><path d="M13 0.2 V25.8 M0.2 13 H25.8" stroke="#7e4c38" stroke-width="1.7"/></svg><div class="u" style="left:72.6px;top:36.0px;height:30px;line-height:30px;font-size:22.6px;color:#000;letter-spacing:0.201px;">androidx</div><svg style="left:12.399999999999999px;top:82.2px" width="14" height="8" viewBox="0 0 14 8" ><path d="M1 1 L7 7 L13 1" fill="none" stroke="#2c2c2c" stroke-width="1.7"/></svg><svg style="left:40px;top:71.8px" width="26" height="26" viewBox="0 0 26 26" ><rect x="2.9" y="2.9" width="20.2" height="20.2" fill="#ecd7a2" stroke="#b06e46" stroke-width="1.8"/><path d="M4.4 4.4 H21.6 M4.4 14.6 H21.6" stroke="#f6e8c0" stroke-width="1.2"/><path d="M13 0.2 V25.8 M0.2 13 H25.8" stroke="#7e4c38" stroke-width="1.7"/></svg><div class="u" style="left:72.6px;top:70.0px;height:30px;line-height:30px;font-size:22.6px;color:#000;letter-spacing:-0.065px;">com</div><svg style="left:40.4px;top:116.2px" width="14" height="8" viewBox="0 0 14 8" ><path d="M1 1 L7 7 L13 1" fill="none" stroke="#2c2c2c" stroke-width="1.7"/></svg><svg style="left:68px;top:105.8px" width="26" height="26" viewBox="0 0 26 26" ><rect x="2.9" y="2.9" width="20.2" height="20.2" fill="#ecd7a2" stroke="#b06e46" stroke-width="1.8"/><path d="M4.4 4.4 H21.6 M4.4 14.6 H21.6" stroke="#f6e8c0" stroke-width="1.2"/><path d="M13 0.2 V25.8 M0.2 13 H25.8" stroke="#7e4c38" stroke-width="1.7"/></svg><div class="u" style="left:100.6px;top:104.0px;height:30px;line-height:30px;font-size:22.6px;color:#000;letter-spacing:-0.078px;">chick</div><svg style="left:68.4px;top:150.2px" width="14" height="8" viewBox="0 0 14 8" ><path d="M1 1 L7 7 L13 1" fill="none" stroke="#2c2c2c" stroke-width="1.7"/></svg><svg style="left:96px;top:139.8px" width="26" height="26" viewBox="0 0 26 26" ><rect x="2.9" y="2.9" width="20.2" height="20.2" fill="#ecd7a2" stroke="#b06e46" stroke-width="1.8"/><path d="M4.4 4.4 H21.6 M4.4 14.6 H21.6" stroke="#f6e8c0" stroke-width="1.2"/><path d="M13 0.2 V25.8 M0.2 13 H25.8" stroke="#7e4c38" stroke-width="1.7"/></svg><div class="u" style="left:128.6px;top:138.0px;height:30px;line-height:30px;font-size:22.6px;color:#000;letter-spacing:0.199px;">androdbgme</div><svg style="left:96.4px;top:184.2px" width="14" height="8" viewBox="0 0 14 8" ><path d="M1 1 L7 7 L13 1" fill="none" stroke="#2c2c2c" stroke-width="1.7"/></svg><svg style="left:124px;top:173.8px" width="26" height="26" viewBox="0 0 26 26" ><rect x="2.9" y="2.9" width="20.2" height="20.2" fill="#ecd7a2" stroke="#b06e46" stroke-width="1.8"/><path d="M4.4 4.4 H21.6 M4.4 14.6 H21.6" stroke="#f6e8c0" stroke-width="1.2"/><path d="M13 0.2 V25.8 M0.2 13 H25.8" stroke="#7e4c38" stroke-width="1.7"/></svg><div class="u" style="left:156.6px;top:172.0px;height:30px;line-height:30px;font-size:22.6px;color:#000;letter-spacing:0.338px;">databinding</div><svg style="left:126.6px;top:215px" width="8" height="14" viewBox="0 0 8 14" ><path d="M1 1 L7 7 L1 13" fill="none" stroke="#828282" stroke-width="1.7"/></svg><svg style="left:151px;top:206.6px" width="28" height="28" viewBox="0 0 16 16" ><defs><radialGradient id="gk" cx="0.5" cy="0.45" r="0.6"><stop offset="0" stop-color="#62b86c"/><stop offset="0.75" stop-color="#3d9d4c"/><stop offset="1" stop-color="#1f7f38"/></radialGradient></defs><circle cx="8" cy="8.25" r="6.9" fill="url(#gk)" stroke="#2a8540" stroke-width="0.7"/><path d="M12 6.5 A4 4 0 1 0 12 10.1" fill="none" stroke="#fff" stroke-width="2.6"/></svg><div class="u" style="left:184.6px;top:206.0px;height:30px;line-height:30px;font-size:22.6px;color:#000;letter-spacing:0.402px;">ActivityMainBinding</div><svg style="left:98.60000000000001px;top:249px" width="8" height="14" viewBox="0 0 8 14" ><path d="M1 1 L7 7 L1 13" fill="none" stroke="#828282" stroke-width="1.7"/></svg><svg style="left:123px;top:240.6px" width="28" height="28" viewBox="0 0 16 16" ><defs><radialGradient id="gk" cx="0.5" cy="0.45" r="0.6"><stop offset="0" stop-color="#62b86c"/><stop offset="0.75" stop-color="#3d9d4c"/><stop offset="1" stop-color="#1f7f38"/></radialGradient></defs><circle cx="8" cy="8.25" r="6.9" fill="url(#gk)" stroke="#2a8540" stroke-width="0.7"/><path d="M12 6.5 A4 4 0 1 0 12 10.1" fill="none" stroke="#fff" stroke-width="2.6"/></svg><div class="u" style="left:156.6px;top:240.0px;height:30px;line-height:30px;font-size:22.6px;color:#000;letter-spacing:0.001px;">BuildConfig</div><div style="left:117px;top:272px;width:169px;height:33.4px;background:#d9d9d9;border-radius:2px"></div><svg style="left:96.4px;top:286.2px" width="14" height="8" viewBox="0 0 14 8" ><path d="M1 1 L7 7 L13 1" fill="none" stroke="#2c2c2c" stroke-width="1.7"/></svg><svg style="left:123px;top:274.6px" width="28" height="28" viewBox="0 0 16 16" ><defs><radialGradient id="gk" cx="0.5" cy="0.45" r="0.6"><stop offset="0" stop-color="#62b86c"/><stop offset="0.75" stop-color="#3d9d4c"/><stop offset="1" stop-color="#1f7f38"/></radialGradient></defs><circle cx="8" cy="8.25" r="6.9" fill="url(#gk)" stroke="#2a8540" stroke-width="0.7"/><path d="M12 6.5 A4 4 0 1 0 12 10.1" fill="none" stroke="#fff" stroke-width="2.6"/></svg><div class="u" style="left:156.6px;top:274.0px;height:30px;line-height:30px;font-size:22.6px;color:#000;letter-spacing:0.553px;">MainActivity</div><svg style="left:152px;top:309px" width="28" height="28" viewBox="0 0 28 28" ><rect x="8.4" y="9.6" width="9" height="9" fill="#d94860" stroke="#c63450" stroke-width="0.8"/><path d="M12.9 11.6 V16.6 M10.4 14.1 H15.4" stroke="#fff" stroke-width="2.2"/></svg><div class="u" style="left:184.6px;top:308.0px;height:30px;line-height:30px;font-size:22.6px;color:#000;letter-spacing:0.444px;">binding : ActivityMainBinding</div><svg style="left:152px;top:343px" width="28" height="28" viewBox="0 0 28 28" ><defs><linearGradient id="gmb" x1="0" y1="0" x2="0" y2="1"><stop offset="0" stop-color="#5aa672"/><stop offset="0.28" stop-color="#93c99c"/><stop offset="0.5" stop-color="#5fa873"/><stop offset="1" stop-color="#2f8a55"/></linearGradient></defs><circle cx="12" cy="15.3" r="7.5" fill="url(#gmb)" stroke="#2c8757" stroke-width="1.5"/><path d="M6.6 -1.6 H1.6 Q-1 -1.6 -1 1 V6 Q-1 8.6 1.6 8.6 H6.6" fill="none" stroke="#2f9a50" stroke-width="2.7" transform="translate(0.6,-0.4)"/></svg><div class="u" style="left:184.6px;top:342.0px;height:30px;line-height:30px;font-size:22.6px;color:#000;letter-spacing:0.385px;">MainActivity()</div><svg style="left:152px;top:377px" width="28" height="28" viewBox="0 0 28 28" ><defs><linearGradient id="gmb" x1="0" y1="0" x2="0" y2="1"><stop offset="0" stop-color="#5aa672"/><stop offset="0.28" stop-color="#93c99c"/><stop offset="0.5" stop-color="#5fa873"/><stop offset="1" stop-color="#2f8a55"/></linearGradient></defs><circle cx="12" cy="14.7" r="7.5" fill="url(#gmb)" stroke="#2c8757" stroke-width="1.5"/></svg><div class="u" style="left:184.6px;top:376.0px;height:30px;line-height:30px;font-size:22.6px;color:#000;">encode(String, String) : String</div><svg style="left:152px;top:411px" width="28" height="28" viewBox="0 0 28 28" ><defs><linearGradient id="gmb" x1="0" y1="0" x2="0" y2="1"><stop offset="0" stop-color="#5aa672"/><stop offset="0.28" stop-color="#93c99c"/><stop offset="0.5" stop-color="#5fa873"/><stop offset="1" stop-color="#2f8a55"/></linearGradient></defs><circle cx="12" cy="14.7" r="7.5" fill="url(#gmb)" stroke="#2c8757" stroke-width="1.5"/></svg><div class="u" style="left:184.6px;top:410.0px;height:30px;line-height:30px;font-size:22.6px;color:#000;letter-spacing:-0.091px;">ksa(Integer[], String) : void</div><svg style="left:126.6px;top:453px" width="8" height="14" viewBox="0 0 8 14" ><path d="M1 1 L7 7 L1 13" fill="none" stroke="#828282" stroke-width="1.7"/></svg><svg style="left:152px;top:445px" width="28" height="28" viewBox="0 0 28 28" ><defs><linearGradient id="gmy" x1="0" y1="0" x2="0" y2="1"><stop offset="0" stop-color="#fff3b8"/><stop offset="1" stop-color="#fbd96e"/></linearGradient></defs><circle cx="12" cy="14.7" r="7.5" fill="url(#gmy)" stroke="#c9a23a" stroke-width="1.6"/></svg><div class="u" style="left:184.6px;top:444.0px;height:30px;line-height:30px;font-size:22.6px;color:#000;letter-spacing:-0.161px;">onCreate(Bundle) : void</div><svg style="left:152px;top:479px" width="28" height="28" viewBox="0 0 28 28" ><defs><linearGradient id="gmb" x1="0" y1="0" x2="0" y2="1"><stop offset="0" stop-color="#5aa672"/><stop offset="0.28" stop-color="#93c99c"/><stop offset="0.5" stop-color="#5fa873"/><stop offset="1" stop-color="#2f8a55"/></linearGradient></defs><circle cx="12" cy="14.7" r="7.5" fill="url(#gmb)" stroke="#2c8757" stroke-width="1.5"/></svg><div class="u" style="left:184.6px;top:478.0px;height:30px;line-height:30px;font-size:22.6px;color:#000;letter-spacing:0.1px;">rpga(Integer[], Character[], int) : void</div><svg style="left:152px;top:513px" width="28" height="28" viewBox="0 0 28 28" ><defs><linearGradient id="gmb" x1="0" y1="0" x2="0" y2="1"><stop offset="0" stop-color="#5aa672"/><stop offset="0.28" stop-color="#93c99c"/><stop offset="0.5" stop-color="#5fa873"/><stop offset="1" stop-color="#2f8a55"/></linearGradient></defs><circle cx="12" cy="14.7" r="7.5" fill="url(#gmb)" stroke="#2c8757" stroke-width="1.5"/></svg><div class="u" style="left:184.6px;top:512.0px;height:30px;line-height:30px;font-size:22.6px;color:#000;letter-spacing:0.177px;">swap(Integer[], int, int) : void</div><svg style="left:98.60000000000001px;top:555px" width="8" height="14" viewBox="0 0 8 14" ><path d="M1 1 L7 7 L1 13" fill="none" stroke="#828282" stroke-width="1.7"/></svg><svg style="left:123px;top:546.6px" width="28" height="28" viewBox="0 0 16 16" ><defs><radialGradient id="gk" cx="0.5" cy="0.45" r="0.6"><stop offset="0" stop-color="#62b86c"/><stop offset="0.75" stop-color="#3d9d4c"/><stop offset="1" stop-color="#1f7f38"/></radialGradient></defs><circle cx="8" cy="8.25" r="6.9" fill="url(#gk)" stroke="#2a8540" stroke-width="0.7"/><path d="M12 6.5 A4 4 0 1 0 12 10.1" fill="none" stroke="#fff" stroke-width="2.6"/></svg><div class="u" style="left:156.6px;top:546.0px;height:30px;line-height:30px;font-size:22.6px;color:#000;letter-spacing:0.734px;">R</div><svg style="left:42.6px;top:589px" width="8" height="14" viewBox="0 0 8 14" ><path d="M1 1 L7 7 L1 13" fill="none" stroke="#828282" stroke-width="1.7"/></svg><svg style="left:68px;top:581.8px" width="26" height="26" viewBox="0 0 26 26" ><rect x="2.9" y="2.9" width="20.2" height="20.2" fill="#ecd7a2" stroke="#b06e46" stroke-width="1.8"/><path d="M4.4 4.4 H21.6 M4.4 14.6 H21.6" stroke="#f6e8c0" stroke-width="1.2"/><path d="M13 0.2 V25.8 M0.2 13 H25.8" stroke="#7e4c38" stroke-width="1.7"/></svg><div class="u" style="left:100.6px;top:580.0px;height:30px;line-height:30px;font-size:22.6px;color:#000;letter-spacing:0.072px;">google</div></div>
<div style="left:44px;top:1338px;width:287px;height:15px;background:#858585"></div>
<div style="left:25px;top:1371px;width:408px;height:33px;background:#fff;border-bottom:1px solid #7a7a7a;border-radius:2px"></div>
<svg style="left:29.5px;top:1376.5px" width="21" height="21" viewBox="0 0 16 16" ><circle cx="10" cy="6" r="4.1" fill="none" stroke="#7a7a7a" stroke-width="2.2"/><path d="M7 9 L1.4 14.6" stroke="#7a7a7a" stroke-width="2.6" stroke-linecap="round"/></svg>
<div class="u" style="left:55px;top:1372.5px;height:30px;line-height:30px;font-size:22.6px;color:#5a5a5a;"><span class="cj" style="font-size:21px">过滤器：输入</span> "Enter" <span class="cj" style="font-size:21px">以验证</span></div>
<div style="left:24px;top:1426px;width:20px;height:20px;background:#f5f5f5;border:1px solid #5a5a5a;border-radius:5px"></div>
<svg style="left:58px;top:1424px" width="25" height="25" viewBox="0 0 26 26" ><rect x="2.9" y="2.9" width="20.2" height="20.2" fill="#ecd7a2" stroke="#b06e46" stroke-width="1.8"/><path d="M4.4 4.4 H21.6 M4.4 14.6 H21.6" stroke="#f6e8c0" stroke-width="1.2"/><path d="M13 0.2 V25.8 M0.2 13 H25.8" stroke="#7e4c38" stroke-width="1.7"/></svg>
<div style="left:122px;top:1426px;width:20px;height:20px;background:#0a5cc2;border-radius:4px"></div><svg style="left:122px;top:1426px" width="20" height="20" viewBox="0 0 20 20" ><path d="M5 10.4 L8.6 14 L15 6.6" fill="none" stroke="#fff" stroke-width="1.25"/></svg>
<svg style="left:155px;top:1422px" width="28" height="28" viewBox="0 0 16 16" ><defs><radialGradient id="gk" cx="0.5" cy="0.45" r="0.6"><stop offset="0" stop-color="#62b86c"/><stop offset="0.75" stop-color="#3d9d4c"/><stop offset="1" stop-color="#1f7f38"/></radialGradient></defs><circle cx="8" cy="8.25" r="6.9" fill="url(#gk)" stroke="#2a8540" stroke-width="0.7"/><path d="M12 6.5 A4 4 0 1 0 12 10.1" fill="none" stroke="#fff" stroke-width="2.6"/></svg>
<div style="left:220px;top:1426px;width:20px;height:20px;background:#0a5cc2;border-radius:4px"></div><svg style="left:220px;top:1426px" width="20" height="20" viewBox="0 0 20 20" ><path d="M5 10.4 L8.6 14 L15 6.6" fill="none" stroke="#fff" stroke-width="1.25"/></svg>
<svg style="left:254px;top:1423px" width="28" height="28" viewBox="0 0 28 28" ><defs><linearGradient id="gmb" x1="0" y1="0" x2="0" y2="1"><stop offset="0" stop-color="#5aa672"/><stop offset="0.28" stop-color="#93c99c"/><stop offset="0.5" stop-color="#5fa873"/><stop offset="1" stop-color="#2f8a55"/></linearGradient></defs><circle cx="12" cy="14.7" r="7.5" fill="url(#gmb)" stroke="#2c8757" stroke-width="1.5"/></svg>
<div style="left:318px;top:1426px;width:20px;height:20px;background:#0a5cc2;border-radius:4px"></div><svg style="left:318px;top:1426px" width="20" height="20" viewBox="0 0 20 20" ><path d="M5 10.4 L8.6 14 L15 6.6" fill="none" stroke="#fff" stroke-width="1.25"/></svg>
<svg style="left:350px;top:1422px" width="28" height="28" viewBox="0 0 16 16" ><circle cx="8" cy="8" r="2.6" fill="#e8f6ea" stroke="#2f9f5a" stroke-width="1.5" stroke-dasharray="1.2 0.5"/></svg>
<!-- disassembly -->
<svg style="left:464px;top:142px" width="641" height="1061" viewBox="0 0 641 1061" shape-rendering="geometricPrecision"><path d="M0.5 1060.5 V4.5 L4.5 0.5 H636.5 L640.5 4.5 V1060.5 Z" fill="none" stroke="#a0a0a0" stroke-width="1"/></svg><div style="left:466px;top:144px;width:263px;height:4px;background:#6d6d6d"></div><div style="left:728px;top:144px;width:1px;height:41px;background:#a0a0a0"></div><div style="left:728px;top:184px;width:376px;height:1px;background:#a0a0a0"></div>
<svg style="left:476px;top:149px" width="26.0" height="31.0" viewBox="0 0 26 31" ><g fill="#a2c43a"><path d="M4.6 9.2 A8.4 8.6 0 0 1 21.4 9.2 Z"/><path d="M4.6 10.2 H21.4 V21.6 Q21.4 23.4 19.6 23.4 H6.4 Q4.6 23.4 4.6 21.6 Z"/><rect x="0.2" y="10" width="3.6" height="10.8" rx="1.8"/><rect x="22.2" y="10" width="3.6" height="10.8" rx="1.8"/><rect x="7.6" y="21" width="3.7" height="9.8" rx="1.8"/><rect x="14.7" y="21" width="3.7" height="9.8" rx="1.8"/></g><path d="M7.4 0.6 L9 3 M18.6 0.6 L17 3" stroke="#a2c43a" stroke-width="0.9" stroke-linecap="round"/><circle cx="9.2" cy="5.4" r="0.9" fill="#e4efc0"/><circle cx="16.8" cy="5.4" r="0.9" fill="#e4efc0"/></svg>
<div class="u" style="left:512.1px;top:150.0px;height:30px;line-height:30px;font-size:22.6px;color:#000;letter-spacing:0.166px;">Bytecode/</div>
<div class="u" style="left:614.4px;top:150.0px;height:30px;line-height:30px;font-size:22.6px;color:#000;"><span class="cj" style="font-size:20.8px">反汇编</span></div>
<svg style="left:696.0px;top:155.5px" width="17.0" height="17.0" viewBox="0 0 17.0 17.0" ><path d="M0.5 0.5 L16.5 16.5 M16.5 0.5 L0.5 16.5" stroke="#101010" stroke-width="1.15"/></svg>
<div style="left:470px;top:190px;width:630px;height:1008px;border:1px solid #a0a0a0;background:#fff;"></div>
<div style="left:472px;top:192px;width:625px;height:1003px;background:#f0f0f0"></div><div style="left:473px;top:1157px;width:623px;height:37px;background:#f0f0f0"></div><svg style="left:472px;top:192px" width="625" height="1003" viewBox="0 0 625 1003" ><path d="M0.5 0.5 H624.5 V998.5 L620.5 1002.5 H4.5 L0.5 998.5 Z" fill="none" stroke="#a0a0a0"/></svg><div style="left:472px;top:1156px;width:200px;height:1px;background:#a0a0a0"></div><div style="left:750px;top:1156px;width:346px;height:1px;background:#a0a0a0"></div><div style="left:530px;top:1157px;width:1px;height:37px;background:#a0a0a0"></div><div class="u" style="left:480px;top:1160.5px;height:30px;line-height:30px;font-size:22.6px;color:#000;"><span class="cj" style="font-size:21px">描述</span></div><div style="left:672px;top:1157px;width:1px;height:37px;background:#a0a0a0"></div><div class="u" style="left:538px;top:1160.5px;height:30px;line-height:30px;font-size:22.6px;color:#000;"><span class="cj" style="font-size:21px">十六进制转储</span></div><div style="left:750px;top:1156px;width:1px;height:37px;background:#a0a0a0"></div><div class="u" style="left:679.5px;top:1160.5px;height:30px;line-height:30px;font-size:22.6px;color:#000;"><span class="cj" style="font-size:21px">反汇编</span></div><div style="left:808px;top:1157px;width:1px;height:37px;background:#a0a0a0"></div><div class="u" style="left:760px;top:1160.5px;height:30px;line-height:30px;font-size:22.6px;color:#000;"><span class="cj" style="font-size:21px">图形</span></div><div style="left:888px;top:1157px;width:1px;height:37px;background:#a0a0a0"></div><div class="u" style="left:817.5px;top:1160.5px;height:30px;line-height:30px;font-size:22.6px;color:#000;"><span class="cj" style="font-size:21px">调用图</span></div><div style="left:968px;top:1157px;width:1px;height:37px;background:#a0a0a0"></div><div class="u" style="left:898px;top:1160.5px;height:30px;line-height:30px;font-size:22.6px;color:#000;"><span class="cj" style="font-size:21px">字符串</span></div><div style="left:672px;top:1156px;width:1px;height:37px;background:#a0a0a0"></div><div style="left:673px;top:1190px;width:77px;height:4px;background:#6d6d6d"></div>
<div style="left:478px;top:198px;width:6px;height:954px;background:#d0d0d0"></div>
<div style="left:1078px;top:198px;width:14px;height:954px;border:1px solid #a4a4ac;background:#d0d0d0;box-shadow:inset 0 0 0 1px #f4f4f4"></div>
<svg style="left:1080px;top:934px" width="11" height="20" viewBox="0 0 11 20" ><path d="M0 0 L11 10 L0 20 Z" fill="#ffff00"/></svg>
<div class="code" style="left:524px;top:198px;width:548px;height:954px;background:#fff"><div style="left:4px;top:504.0px;width:544px;height:24px;background:#e8e8f8"></div><div style="left:4px;top:1.6px">              0x42</div><div style="left:4px;top:25.6px">              0x3E</div><div style="left:4px;top:49.6px">              0x2D</div><div style="left:4px;top:73.6px">              0x47</div><div style="left:4px;top:97.6px">              0xCA</div><div style="left:4px;top:121.6px">              0x3C</div><div style="left:4px;top:145.6px">              0x31</div><div style="left:4px;top:169.6px">              0x47</div><div style="left:4px;top:193.6px">              0xC6</div><div style="left:4px;top:217.6px">              0x7A</div><div style="left:4px;top:241.6px">              0xED</div><div style="left:4px;top:265.6px">              0x68</div><div style="left:4px;top:289.6px">              0xD2</div><div style="left:4px;top:313.6px">              0x56</div><div style="left:4px;top:337.6px">              0x86</div><div style="left:4px;top:361.6px">              0xDA</div><div style="left:4px;top:385.6px">              0x9C</div><div style="left:4px;top:409.6px">              0xF</div><div style="left:4px;top:433.6px">          <span class="k">.end array-data</span></div><div style="left:4px;top:457.6px"><span class="k">.end method</span></div><div style="left:4px;top:505.6px"><span class="k" style="background:#ffff80">.class</span> <span class="k">public</span> <span class="c">MainActivity</span></div><div style="left:4px;top:529.6px"><span class="k">.super</span> <span class="c">AppCompatActivity</span></div><div style="left:4px;top:577.6px"><span class="k">.field private</span> <span class="it">binding</span>:<span class="c">ActivityMainBinding</span></div><div style="left:4px;top:625.6px"><span class="k">.method public constructor</span> &lt;init&gt;()V</div><div style="left:4px;top:649.6px">          <span class="k">.registers</span> 1</div><div style="left:4px;top:673.6px"><span class="a">00000000</span>  invoke-direct       <span class="c">AppCompatActivity</span>-&gt;&lt;init&gt;()V, p0</div><div style="left:4px;top:697.6px"><span class="a">00000006</span>  return-void</div><div style="left:4px;top:721.6px"><span class="k">.end method</span></div><div style="left:4px;top:769.6px"><span class="k">.method public</span> encode(<span class="t">String</span>, <span class="t">String</span>)<span class="t">String</span>         <span class="lg"># This method was un-flattened</span></div><div style="left:4px;top:793.6px">          <span class="k">.registers</span> 13</div><div style="left:4px;top:817.6px"><span class="a">00000000</span>  const/4             v5, <span class="n">0</span></div><div style="left:4px;top:841.6px"><span class="a">00000002</span>  const/4             v2, <span class="n">0</span></div><div style="left:4px;top:865.6px"><span class="a">00000004</span>  const-string        v0, <span class="s">"\u06EB\u06EC\u06D8\u06DF\u06E1\u06E5"</span></div><div style="left:4px;top:889.6px"><span class="a">00000008</span>  move                v1, v2</div><div style="left:4px;top:913.6px"><span class="a">0000000A</span>  move                v3, v2</div><div style="left:4px;top:937.6px"><span class="a">0000000C</span>  move-object         v4, v5</div></div>
<!-- decompiled source -->
<div style="left:1113px;top:185px;width:1445px;height:1017px;background:#fff"></div><svg style="left:1112px;top:142px" width="1447" height="1061" viewBox="0 0 1447 1061" shape-rendering="geometricPrecision"><path d="M0.5 1060.5 V4.5 L4.5 0.5 H1442.5 L1446.5 4.5 V1060.5 Z" fill="none" stroke="#a0a0a0" stroke-width="1"/></svg><div style="left:1114px;top:144px;width:297px;height:4px;background:#0078d7"></div><div style="left:1410px;top:144px;width:1px;height:41px;background:#a0a0a0"></div><div style="left:1410px;top:184px;width:1148px;height:1px;background:#a0a0a0"></div>
<div style="left:1113px;top:148px;width:297px;height:37px;background:#fff"></div>
<svg style="left:1123.5px;top:149.5px" width="29" height="29" viewBox="0 0 16 16" ><path d="M2.6 1 H10 L13.4 4.4 V15 H2.6 Z" fill="#f3f3ee" stroke="#a8873a" stroke-width="1.1"/><path d="M10 1 V4.4 H13.4 Z" fill="#e8d292" stroke="#a8873a" stroke-width="0.8"/><path d="M9.4 4.4 V10.2 Q9.4 12.4 7.2 12.4 H5" fill="none" stroke="#2f64a8" stroke-width="2.1"/></svg>
<div class="u" style="left:1159.8px;top:150.0px;height:30px;line-height:30px;font-size:22.6px;color:#000;letter-spacing:0.828px;">MainActivity/</div>
<div class="u" style="left:1297.7px;top:150.0px;height:30px;line-height:30px;font-size:22.6px;color:#000;"><span class="cj" style="font-size:20.7px">源代码</span></div>
<svg style="left:1378.5px;top:155.5px" width="17.0" height="17.0" viewBox="0 0 17.0 17.0" ><path d="M0.5 0.5 L16.5 16.5 M16.5 0.5 L0.5 16.5" stroke="#101010" stroke-width="1.15"/></svg>
<div style="left:1118px;top:190px;width:1436px;height:1008px;border:1px solid #a0a0a0;background:#fff;"></div>
<div style="left:1120px;top:192px;width:1431px;height:1003px;background:#fff"></div><div style="left:1121px;top:1157px;width:1429px;height:37px;background:#f0f0f0"></div><svg style="left:1120px;top:192px" width="1431" height="1003" viewBox="0 0 1431 1003" ><path d="M0.5 0.5 H1430.5 V998.5 L1426.5 1002.5 H4.5 L0.5 998.5 Z" fill="none" stroke="#a0a0a0"/></svg><div style="left:1120px;top:1156px;width:58px;height:1px;background:#a0a0a0"></div><div style="left:1256px;top:1156px;width:1294px;height:1px;background:#a0a0a0"></div><div style="left:1178px;top:1157px;width:1px;height:37px;background:#a0a0a0"></div><div class="u" style="left:1128.5px;top:1160.5px;height:30px;line-height:30px;font-size:22.6px;color:#000;"><span class="cj" style="font-size:21px">描述</span></div><div style="left:1256px;top:1156px;width:1px;height:37px;background:#a0a0a0"></div><div class="u" style="left:1186px;top:1160.5px;height:30px;line-height:30px;font-size:22.6px;color:#000;"><span class="cj" style="font-size:21px">源代码</span></div><div style="left:1178px;top:1156px;width:1px;height:37px;background:#a0a0a0"></div><div style="left:1179px;top:1190px;width:77px;height:4px;background:#0078d7"></div>
<div style="left:1126px;top:198px;width:34px;height:954px;background:#f0f0f0"></div>
<div style="left:2510px;top:198px;width:6px;height:954px;background:#f0f0f0"></div>
<div style="left:2516px;top:198px;width:30px;height:954px;border:1px solid #a4a4ac;background:#d0d0d0;box-shadow:inset 0 0 0 1px #f4f4f4"></div>
<div style="left:2522px;top:630px;width:22px;height:349px;background:#c1d9b1;border:1px solid #7cfc00"></div>
<svg style="left:2519px;top:835px" width="14" height="20" viewBox="0 0 14 20" ><path d="M0 0 L14 10 L0 20 Z" fill="#ffff00"/></svg>
<div class="code" style="left:1160px;top:198px;width:1350px;height:954px;background:#fff"><div style="left:4px;top:576.0px;width:1346px;height:24px;background:#e8e8f8"></div><div style="left:4px;top:1.6px">        <span class="k">super</span>.onCreate(bundle0);</div><div style="left:4px;top:25.6px">        <span class="c">ActivityMainBinding</span> activityMainBinding0 = <span class="c">ActivityMainBinding</span>.inflate(<span class="k">this</span>.getLayoutInflater());</div><div style="left:4px;top:49.6px">        <span class="k">this</span>.<span class="it">binding</span> = activityMainBinding0;</div><div style="left:4px;top:73.6px">        <span class="k">this</span>.setContentView(activityMainBinding0.getRoot());</div><div style="left:4px;top:97.6px">        <span class="t">EditText</span> editText0 = (<span class="t">EditText</span>)<span class="k">this</span>.findViewById(<span class="n">0x7F080144</span>);  <span class="lg">// id:password</span></div><div style="left:4px;top:121.6px">        ((<span class="t">Button</span>)<span class="k">this</span>.findViewById(<span class="n">0x7F080062</span>)).setOnClickListener(<span class="k">new</span> <span class="t">View.OnClickListener</span>() {  <span class="lg">// id:button</span></div><div style="left:4px;top:145.6px">            <span class="k">final</span> <span class="c">MainActivity</span> <span class="it">this$0</span>;</div><div style="left:4px;top:169.6px">            <span class="k">final</span> <span class="t">EditText</span> <span class="it">val$password</span>;</div><div style="left:4px;top:217.6px">            <span class="cm">// This method was un-flattened</span></div><div style="left:4px;top:241.6px">            <span class="g">@Override</span>  <span class="lg">// android.view.View$OnClickListener</span></div><div style="left:4px;top:265.6px">            <span class="k">public void</span> onClick(<span class="t">View</span> view0) {</div><div style="left:4px;top:289.6px">                <span class="t">String</span> s2;</div><div style="left:4px;top:313.6px">                <span class="t">String</span> s1;</div><div style="left:4px;top:337.6px">                <span class="t">String</span> s = editText0.getText().toString();</div><div style="left:4px;top:361.6px">                <span class="k">if</span>(<span class="t">Debug</span>.isDebuggerConnected()) {</div><div style="left:4px;top:385.6px">                    <span class="t">StringBuilder</span> stringBuilder0 = <span class="k">new</span> StringBuilder();</div><div style="left:4px;top:409.6px">                    <span class="k">for</span>(<span class="k">int</span> v = <span class="n">0</span>; v &lt; <span class="n">40</span>; ++v) {</div><div style="left:4px;top:433.6px">                        stringBuilder0.append(<span class="k">new char</span>[]{<span class="n">'\u000E'</span>, <span class="n">'î'</span>, <span class="n">'='</span>, <span class="n">'s'</span>, <span class="n">'0'</span>, <span class="n">'Ö'</span>, <span class="n">'Í'</span>, <span class="n">'\u0012'</span>, <span class="n">'Ð'</span>, <span class="n">'Ý'</span>, <span class="n">'\f'</span>, <span class="n">'k'</span>, <span class="n">'!'</span>, <span class="n">'³'</span>, <span class="n">'x'</span>, <span class="n">'\u0019'</span>});</div><div style="left:4px;top:457.6px">                    }</div><div style="left:4px;top:505.6px">                    s1 = <span class="s">"truelove2u"</span>;</div><div style="left:4px;top:529.6px">                    s2 = stringBuilder0.toString();</div><div style="left:4px;top:553.6px">                }</div><div style="left:4px;top:577.6px">                <span class="k">else</span> {</div><div style="left:4px;top:601.6px">                    s2 = s;</div><div style="left:4px;top:625.6px">                    s1 = <span class="s">"maybe_u_need_glasses"</span>;</div><div style="left:4px;top:649.6px">                }</div><div style="left:4px;top:697.6px">                <span class="t">Toast</span>.makeText(<span class="c">MainActivity</span>.<span class="k">this</span>, <span class="c">MainActivity</span>.<span class="k">this</span>.encode(s2, s1), <span class="n">1</span>).show();</div><div style="left:4px;top:721.6px">                <span class="t">Log</span>.d(<span class="s">"<span class="cj15">输入</span>"</span>, editText0.getText().toString());</div><div style="left:4px;top:745.6px">            }</div><div style="left:4px;top:769.6px">        });</div><div style="left:4px;top:793.6px">    }</div><div style="left:4px;top:841.6px">    <span class="cm">// This method was un-flattened</span></div><div style="left:4px;top:865.6px">    <span class="k">public void</span> rpga(<span class="t">Integer</span>[] arr_integer, <span class="t">Character</span>[] arr_character, <span class="k">int</span> v) {</div><div style="left:4px;top:889.6px">        <span class="k">int</span> v2 = <span class="n">0</span>;</div><div style="left:4px;top:913.6px">        <span class="k">int</span> v3 = <span class="n">0</span>;</div><div style="left:4px;top:937.6px">        <span class="k">for</span>(<span class="k">int</span> v1 = <span class="n">0</span>; v3 &lt; v; v1 = v5) {</div><div style="left:224px;top:577px;width:1px;height:22px;background:#000"></div><div style="left:1294px;top:0px;width:56px;height:30px;background:#f0f0f0;border-left:1px solid #a0a0a0;border-top:1px solid #a0a0a0;border-bottom:1px solid #fff"></div><div class="u" style="left:1301.5px;top:0;height:30px;line-height:30px;font-size:21px;color:#000"><span class="cj" style="font-size:21px">助手</span></div></div>
<!-- logger -->
<svg style="left:464px;top:1210px" width="2095" height="265" viewBox="0 0 2095 265" shape-rendering="geometricPrecision"><path d="M0.5 264.5 V4.5 L4.5 0.5 H2090.5 L2094.5 4.5 V264.5 Z" fill="none" stroke="#a0a0a0" stroke-width="1"/></svg><div style="left:466px;top:1212px;width:159px;height:4px;background:#6d6d6d"></div><div style="left:624px;top:1212px;width:1px;height:41px;background:#a0a0a0"></div><div style="left:624px;top:1252px;width:1934px;height:1px;background:#a0a0a0"></div>
<div style="left:722px;top:1211px;width:1px;height:41px;background:#a0a0a0"></div>
<div style="left:862px;top:1211px;width:1px;height:41px;background:#a0a0a0"></div>
<div style="left:960px;top:1211px;width:1px;height:41px;background:#a0a0a0"></div>
<div style="left:1142px;top:1211px;width:1px;height:41px;background:#a0a0a0"></div>
<div style="left:1241px;top:1211px;width:1px;height:41px;background:#a0a0a0"></div>
<svg style="left:475px;top:1218px" width="28" height="28" viewBox="0 0 16 16" ><rect x="1" y="1" width="14" height="10.6" rx="1.4" fill="#3d6fc4" stroke="#26509a" stroke-width="0.8"/><rect x="2.8" y="2.8" width="10.4" height="7" fill="#eef3fb"/><path d="M4.2 5 H10.8 M4.2 7.4 H9" stroke="#3b5f9e" stroke-width="1"/><rect x="6" y="11.6" width="4" height="1.8" fill="#2c55a0"/><rect x="3.4" y="13.2" width="9.2" height="1.8" rx="0.6" fill="#3d6fc4"/></svg>
<div class="u" style="left:513px;top:1217.0px;height:30px;line-height:30px;font-size:22.6px;color:#000;"><span class="cj" style="font-size:21px">日志记录器</span></div>
<svg style="left:636px;top:1218px" width="28" height="28" viewBox="0 0 16 16" ><rect x="4.6" y="0.8" width="11" height="8.6" rx="0.8" fill="#eaf1fb" stroke="#5f86c8" stroke-width="1"/><path d="M6.4 3.2 H13.8 M6.4 5.2 H13.8 M6.4 7.2 H11" stroke="#6d92d0" stroke-width="0.8"/><rect x="0.6" y="7.4" width="7.6" height="5.6" rx="0.6" fill="#c9daf3" stroke="#4d74ba" stroke-width="0.9"/><rect x="2.4" y="13" width="4" height="1.2" fill="#4d74ba"/><rect x="1.2" y="14.2" width="6.4" height="1.2" fill="#4d74ba"/></svg>
<div class="u" style="left:673.5px;top:1217.0px;height:30px;line-height:30px;font-size:22.6px;color:#000;"><span class="cj" style="font-size:21px">终端</span></div>
<svg style="left:733px;top:1218px" width="30" height="30" viewBox="0 0 16 16" ><path d="M1 15 L4.4 9.6 L7.4 12.4 Z" fill="#fff6c0" stroke="#f0d060" stroke-width="0.5"/><path d="M3.8 10.2 L6 7.2 L9.4 10.4 L6.8 13 Z" fill="#8a7a72" stroke="#6a5a52" stroke-width="0.5"/><path d="M6 7.2 L11.2 1.6 Q13.4 0.8 15 1.4 Q15.4 3.4 14.6 5 L9.4 10.4 Z" fill="#f3c25a" stroke="#b8861a" stroke-width="0.7"/><path d="M12 2.2 L14 4.2" stroke="#fbe6a8" stroke-width="1.2"/><circle cx="12.6" cy="3.6" r="0.9" fill="#3a62b0"/></svg>
<div class="u" style="left:772.5px;top:1217.0px;height:30px;line-height:30px;font-size:22.6px;color:#000;"><span class="cj" style="font-size:21px">快速搜索</span></div>
<svg style="left:875px;top:1218px" width="28" height="28" viewBox="0 0 16 16" ><path d="M3 1.2 H10 L13.6 4.8 V14.8 H3 Z" fill="#fbf7e8" stroke="#c2a04a" stroke-width="1"/><path d="M10 1.2 V4.8 H13.6 Z" fill="#ead79a" stroke="#c2a04a" stroke-width="0.7"/><path d="M4 8.4 H8 V6.4 L11.2 9.2 L8 12 V10 H4 Z" fill="#a8b4cc" stroke="#8090b0" stroke-width="0.6"/></svg>
<div class="u" style="left:912px;top:1217.0px;height:30px;line-height:30px;font-size:22.6px;color:#000;"><span class="cj" style="font-size:21px">引用</span></div>
<svg style="left:966px;top:1217px" width="30" height="30" viewBox="0 0 16 16" ><path d="M4.4 3 V13 H10 M4.4 8.2 H10" fill="none" stroke="#6a7a8a" stroke-width="1.1"/><circle cx="4.4" cy="2.8" r="2" fill="#4aa860" stroke="#2e8044" stroke-width="0.5"/><circle cx="11" cy="8.2" r="2" fill="#4aa860" stroke="#2e8044" stroke-width="0.5"/><circle cx="11" cy="13" r="2" fill="#4aa860" stroke="#2e8044" stroke-width="0.5"/></svg>
<div class="u" style="left:1009.5px;top:1217.0px;height:30px;line-height:30px;font-size:22.6px;color:#000;"><span class="cj" style="font-size:21px">类型层次结构</span></div>
<svg style="left:1154px;top:1218px" width="28" height="28" viewBox="0 0 16 16" ><path d="M4.6 4 H6.8 V12.8 H10.4" fill="none" stroke="#7a8a9a" stroke-width="1"/><rect x="1.2" y="2.8" width="2.6" height="2.4" fill="#fff7d0" stroke="#b8962e" stroke-width="0.8"/><rect x="1.2" y="6.8" width="2.6" height="2.4" fill="#fff7d0" stroke="#b8962e" stroke-width="0.8"/><path d="M3.8 8 H6.8" stroke="#7a8a9a" stroke-width="0.8"/><path d="M11.8 2.6 V10.4 M10.2 4.2 L11.8 1.8 L13.4 4.2" fill="none" stroke="#6a7a8a" stroke-width="0.9"/><circle cx="11.8" cy="12.8" r="2" fill="#4aa860" stroke="#2e8044" stroke-width="0.5"/></svg>
<div class="u" style="left:1192px;top:1217.0px;height:30px;line-height:30px;font-size:22.6px;color:#000;"><span class="cj" style="font-size:21px">覆盖</span></div>
<div style="left:470px;top:1258px;width:2084px;height:212px;border:1px solid #a0a0a0;background:#f0f0f0;"></div>
<div style="left:2522px;top:1259px;width:1px;height:210px;background:#e2e2e2"></div>
<div style="left:2530px;top:1382px;width:15px;height:56px;background:#858585"></div>
<div class="u" style="left:2282.5px;top:1264.0px;height:30px;line-height:30px;font-size:22.6px;color:#000;"><span class="cj" style="font-size:21px">级别</span></div>
<div class="u" style="left:2326.5px;top:1264.0px;height:30px;line-height:30px;font-size:22.6px;color:#000;">:</div>
<div style="left:2360px;top:1260px;width:152px;height:35px;background:#fff;border:1px solid #d4d4d4;border-radius:2px"></div>
<div class="u" style="left:2364.5px;top:1263.5px;height:30px;line-height:30px;font-size:22.6px;color:#000;letter-spacing:-1.246px;">INFO</div>
<svg style="left:2489px;top:1274.5px" width="14" height="8" viewBox="0 0 14 8" ><path d="M1 1 L7 7 L13 1" fill="none" stroke="#5a5a5a" stroke-width="1.2"/></svg>
<div class="code" style="left:471px;top:1259px;width:2040px;height:200px;background:transparent"><div class="w" style="left:4.8px;top:2.6px">[W] <span class="cj15">如果您的工作负载包括反编译混淆的</span> dex <span class="cj15">代码，请考虑将此内容附加到文件</span> jvmopt.txt<span class="cj15">（位于您的</span> JEB <span class="cj15">根文件夹中）：</span></div><div class="w" style="left:4.8px;top:26.6px">[W] --add-opens java.base/java.lang=ALL-UNNAMED</div><div class="w" style="left:4.8px;top:50.6px">[W] <span class="cj15">请注意，</span>jvmopt.txt <span class="cj15">必须包含单行。多个选项用空格分隔。</span></div><div class="e" style="left:4.8px;top:74.6px">[E] Java SecurityManager <span class="cj15">不可用！</span>dexdec <span class="cj15">的沙箱功能将仅限于仿真。</span></div><div class="e" style="left:4.8px;top:98.6px">[E] <span class="cj15">您的</span> JDK <span class="cj15">版本是</span> 23<span class="cj15">。我们推荐使用</span> JDK 17<span class="cj15">，默认启用</span> SecurityManager<span class="cj15">。</span></div><div class="e" style="left:4.8px;top:122.6px">[E] <span class="cj15">使用</span> Java 18 <span class="cj15">或更高版本时，必须显式启用</span> SecurityManager<span class="cj15">。</span></div><div class="e" style="left:4.8px;top:146.6px">[E] <span class="cj15">示例：您可以这样启动</span> JEB<span class="cj15">：</span>`$ java -Djava.security.manager=allow -jar bin/app/jebc.jar`</div></div>
<!-- status bar -->
<div style="left:0px;top:1475px;width:2559px;height:42px;background:#f0f0f0;border-bottom:1px solid #b4b4b4"></div>
<div class="u" style="left:6px;top:1481.6px;height:30px;line-height:30px;font-size:22.6px;color:#000;"><span class="cj" style="font-size:21px">地址：</span></div>
<div class="u" style="left:70.5px;top:1482.0px;height:30px;line-height:30px;font-size:22.6px;color:#000;letter-spacing:0.303px;">Lcom/chick/androdbgme/MainActivity$1;-&gt;onClick(Landroid/view/View;)V+16Eh | </div>
<div class="u" style="left:908px;top:1481.6px;height:30px;line-height:30px;font-size:22.6px;color:#000;"><span class="cj" style="font-size:21px">位置：</span></div>
<div class="u" style="left:971px;top:1482.0px;height:30px;line-height:30px;font-size:22.6px;color:#000;letter-spacing:-1.265px;">@3EEF66,+2</div>
<div style="left:2188px;top:1476px;width:1px;height:40px;background:#a0a0a0"></div>
<div style="left:2402px;top:1476px;width:1px;height:40px;background:#a0a0a0"></div>
<div class="u" style="left:2416px;top:1482.0px;height:30px;line-height:30px;font-size:22.6px;color:#000;letter-spacing:-0.974px;">504.7... 7.9G</div>
<!-- taskbar -->
<div style="left:0px;top:1517px;width:2559px;height:82px;background:linear-gradient(90deg,#dbe1da 0%,#dde2db 20%,#dfe0d9 40%,#e1dfd8 56%,#e2dfd7 68%,#e6e0d6 76%,#efe4d8 80%,#f1e6da 86%,#e9e4de 89%,#e0e3e4 92%,#e2e6ea 100%)"></div>
<svg style="left:596px;top:1539px" width="40" height="40" viewBox="0 0 40 40" ><defs><linearGradient id="gw" gradientUnits="userSpaceOnUse" x1="0" y1="0" x2="40" y2="40"><stop offset="0" stop-color="#52c8fa"/><stop offset="0.5" stop-color="#1b95e6"/><stop offset="1" stop-color="#0668cc"/></linearGradient></defs><rect x="0" y="0" width="19" height="19" rx="1.5" fill="url(#gw)"/><rect x="21" y="0" width="19" height="19" rx="1.5" fill="url(#gw)"/><rect x="0" y="21" width="19" height="19" rx="1.5" fill="url(#gw)"/><rect x="21" y="21" width="19" height="19" rx="1.5" fill="url(#gw)"/></svg>
<div style="left:662px;top:1531px;width:381px;height:54px;background:#f5f5f1;border:1px solid #d0d0ca;border-radius:27px;box-shadow:0 1px 2px rgba(0,0,0,.12);overflow:hidden"><svg style="left:295px;top:5px" width="84" height="48" viewBox="0 0 84 48" ><defs><linearGradient id="ghl" x1="0" y1="0" x2="1" y2="1"><stop offset="0" stop-color="#d9902c"/><stop offset="0.5" stop-color="#9a9a34"/><stop offset="1" stop-color="#5f7f2c"/></linearGradient></defs><path d="M2 46 Q6 40 18 38 Q26 30 36 26 Q44 20 52 22 Q60 16 68 19 Q76 22 80 28 Q82 36 74 42 Q70 46 62 46 Z" fill="url(#ghl)"/><path d="M2 46 Q6 39 20 38 Q40 36 66 44 L62 46 Z" fill="#8faa3c"/><g fill="#f8b31c"><circle cx="8" cy="40" r="3.4"/><circle cx="15" cy="36" r="3.6"/><circle cx="22" cy="41" r="3.4"/><circle cx="29" cy="34" r="3.8"/><circle cx="35" cy="40" r="3.2"/><circle cx="41" cy="31" r="3.8"/><circle cx="46" cy="38" r="3.4"/><circle cx="53" cy="30" r="4"/><circle cx="58" cy="37" r="3.2"/><circle cx="66" cy="32" r="3.8"/><circle cx="70" cy="38" r="2.8"/></g><g fill="#fbd24a"><circle cx="15" cy="35" r="1.6"/><circle cx="29" cy="33" r="1.7"/><circle cx="41" cy="30" r="1.7"/><circle cx="53" cy="29" r="1.8"/><circle cx="66" cy="31" r="1.7"/></g><path d="M2 15 Q4 13 9 14 L22 13.6 L34 6.4 Q36 4.4 37.6 4.4 L38 8 L36 11 Q39 11 40 12.4 L27 16.6 L33 21.8 L30 22.4 L20 17.8 Q8 19.4 3.6 18.4 Q1 17.4 2 15 Z" fill="#cdbdea" stroke="#9484bc" stroke-width="0.8"/><ellipse cx="7" cy="15.6" rx="2" ry="0.9" fill="#6a5a9a"/></svg></div>
<svg style="left:679px;top:1544px" width="28" height="28" viewBox="0 0 28 28" ><circle cx="11.5" cy="11.5" r="8.6" fill="none" stroke="#1f1f1f" stroke-width="2.6"/><path d="M18 18 L25.4 25.4" stroke="#1f1f1f" stroke-width="3" stroke-linecap="round"/></svg>
<div class="u" style="left:725px;top:1542.0px;height:34px;line-height:34px;font-size:22.6px;color:#5c5c5c;"><span class="cj" style="font-size:25px">搜索</span></div>
<svg style="left:1065px;top:1538px" width="43" height="40" viewBox="0 0 43 40" ><defs><linearGradient id="gtv1" x1="0" y1="0" x2="0" y2="1"><stop offset="0" stop-color="#3c3c3c"/><stop offset="1" stop-color="#151515"/></linearGradient><linearGradient id="gtv2" x1="0" y1="0" x2="1" y2="1"><stop offset="0" stop-color="#ffffff" stop-opacity="0.95"/><stop offset="1" stop-color="#e8e8e8" stop-opacity="0.7"/></linearGradient></defs><rect x="1" y="10.5" width="31" height="28.5" rx="3.5" fill="url(#gtv1)"/><rect x="11.5" y="0.5" width="30.5" height="27" rx="3.5" fill="url(#gtv2)" stroke="#e4e4e0" stroke-width="0.8"/></svg>
<svg style="left:1143px;top:1536px" width="41" height="42" viewBox="0 0 41 42" ><defs><linearGradient id="gst" x1="0" y1="0" x2="0" y2="1"><stop offset="0" stop-color="#1f66c0"/><stop offset="1" stop-color="#123f7c"/></linearGradient></defs><rect x="11.4" y="1.2" width="18.6" height="12" rx="3.2" fill="none" stroke="#35b3f3" stroke-width="2.6"/><path d="M0.6 7.6 H40.4 V34 Q40.4 41.4 33 41.4 H8 Q0.6 41.4 0.6 34 Z" fill="url(#gst)"/><rect x="11.4" y="14.4" width="8.2" height="8.2" fill="#f25022"/><rect x="21.4" y="14.4" width="8.2" height="8.2" fill="#7fba00"/><rect x="11.4" y="24.4" width="8.2" height="8.2" fill="#00a4ef"/><rect x="21.4" y="24.4" width="8.2" height="8.2" fill="#ffb900"/></svg>
<svg style="left:1219px;top:1536px" width="44" height="44" viewBox="0 0 44 44" ><defs><linearGradient id="ge1" x1="0" y1="0" x2="1" y2="1"><stop offset="0" stop-color="#35c1f1"/><stop offset="0.5" stop-color="#1b9de2"/><stop offset="1" stop-color="#0c59a4"/></linearGradient><linearGradient id="ge2" x1="0" y1="0" x2="1" y2="0"><stop offset="0" stop-color="#2bc48c"/><stop offset="1" stop-color="#7fe05a"/></linearGradient></defs><path d="M22 1 A21 21 0 0 1 43 21 Q43 31 33 31 Q25 31 26 24 Q27 18 21 17 Q10 17 6 28 Q1 20 5 11 Q11 1 22 1 Z" fill="url(#ge2)"/><path d="M5 11 Q0 22 5 32 Q11 43 24 43 Q34 43 39 36 Q31 41 23 37 Q14 32 15 23 Q16 16 22 15 Q10 14 6 28 Z" fill="url(#ge1)"/><path d="M1 22 A21 21 0 0 0 38 36 Q28 41 20 35 Q12 28 16 19 Q6 20 1 22 Z" fill="#1471c4"/><circle cx="11" cy="33" r="9" fill="#f4f4f4" stroke="#dcdcdc" stroke-width="0.8"/><circle cx="11" cy="30" r="3.2" fill="#8a8a8a"/><path d="M4.8 38 Q11 31 17.2 38 Q11 43 4.8 38 Z" fill="#8a8a8a"/></svg>
<svg style="left:1296px;top:1538px" width="44" height="40" viewBox="0 0 44 40" ><path d="M1 6 Q1 2 5 2 H14 L19 7 H39 Q43 7 43 11 V14 H1 Z" fill="#e8a317"/><rect x="1" y="9" width="42" height="29" rx="3" fill="#fcc534"/><path d="M1 20 H43 V35 Q43 38 40 38 H4 Q1 38 1 35 Z" fill="#fbd04c"/><path d="M12 38 V31 Q12 27 16 27 H28 Q32 27 32 31 V38 Z" fill="#1e7fd6"/><rect x="17" y="31" width="10" height="2.4" rx="1.2" fill="#0b4f94"/></svg>
<svg style="left:1373px;top:1536px" width="44" height="44" viewBox="0 0 44 44" ><defs><linearGradient id="gcu" x1="0" y1="0" x2="0" y2="1"><stop offset="0" stop-color="#23232a"/><stop offset="1" stop-color="#101014"/></linearGradient><linearGradient id="gcl" x1="0" y1="0" x2="0" y2="1"><stop offset="0" stop-color="#d8dae2"/><stop offset="1" stop-color="#5c5f6c"/></linearGradient></defs><rect x="0" y="0" width="44" height="44" rx="8" fill="url(#gcu)"/><path d="M8 13 L19 8.4 V35.6 L8 29.6 Z M11 16 V27.6 L16.4 30.6 V13.8 Z" fill="url(#gcl)" fill-rule="evenodd"/><path d="M36 13 L25 8.4 V35.6 L36 29.6 Z M33 16 V27.6 L27.6 30.6 V13.8 Z" fill="url(#gcl)" fill-rule="evenodd"/><path d="M20.6 16 H23.4 V39 H20.6 Z" fill="url(#gcl)"/><path d="M16 8.6 L22 5.6 L28 8.6 L22 11.8 Z" fill="none" stroke="#8a8d9a" stroke-width="1.1"/></svg>
<svg style="left:1450px;top:1536px" width="44" height="44" viewBox="0 0 44 44" ><defs><linearGradient id="gc" x1="0.2" y1="0" x2="0.8" y2="1"><stop offset="0" stop-color="#ff86b8"/><stop offset="0.55" stop-color="#dd7cf2"/><stop offset="1" stop-color="#a884ff"/></linearGradient></defs><circle cx="22" cy="22" r="21.5" fill="url(#gc)"/><path d="M10.6 27 L11.6 11.4 L17.6 16.6 Q22 15.4 26.4 16.6 L32.4 11.4 L33.4 27 Q33 35.4 22 35.4 Q11 35.4 10.6 27 Z" fill="#fff"/><path d="M14.6 24 L19 25.4 Q17 27.4 14.6 24 Z M29.4 24 L25 25.4 Q27 27.4 29.4 24 Z" fill="#8a5ae0"/><path d="M20.8 29.6 H23.2 L22 31 Z" fill="#8a5ae0"/></svg>
<svg style="left:1532.5px;top:1540px" width="33" height="35" viewBox="0 0 33 35" ><path d="M2 5.6 L25 3 L31 7.4 V30.4 L8.6 32.6 L2 25.6 Z" fill="#fff" stroke="#111" stroke-width="2.6" stroke-linejoin="round"/><path d="M2.4 5.8 L8.4 10.6 L31 8 M8.4 10.6 V32.4" fill="none" stroke="#111" stroke-width="2.2"/><path d="M13.6 27.6 V14.6 L24.8 27.2 V13.2" fill="none" stroke="#111" stroke-width="3"/><path d="M11 14.2 H16.6 M22 13.2 H27.6 M11 27.8 H16.6" stroke="#111" stroke-width="2"/></svg>
<svg style="left:1608px;top:1541px" width="35" height="34" viewBox="0 0 35 34" ><rect x="0" y="0" width="35" height="34" rx="7" fill="#141414"/><path d="M8 21 L13 14 L17 24 L23 9 L25 19" fill="none" stroke="#fff" stroke-width="2.6" stroke-linecap="round" stroke-linejoin="round"/><circle cx="27" cy="12" r="2" fill="#fff"/></svg>
<svg style="left:1681px;top:1536px" width="44" height="44" viewBox="0 0 44 44" ><circle cx="22" cy="22" r="21" fill="#fff"/><path d="M22 1 A21 21 0 0 1 40.2 11.5 H22 A10.5 10.5 0 0 0 12.9 16.8 L3.8 11.5 A21 21 0 0 1 22 1 Z" fill="#e33b2e"/><path d="M40.2 11.5 A21 21 0 0 1 22 43 L31.1 27.2 A10.5 10.5 0 0 0 31.1 16.8 L32 11.5 Z" fill="#fcc934"/><path d="M3.8 11.5 L12.9 27.2 A10.5 10.5 0 0 0 22 32.5 L28 32.5 L22 43 A21 21 0 0 1 3.8 11.5 Z" fill="#1e9c4c"/><circle cx="22" cy="22" r="9.6" fill="#fff"/><circle cx="22" cy="22" r="7.8" fill="#1a73e8"/></svg>
<div style="left:1746px;top:1524px;width:67px;height:67px;background:#f0efe8;border:1px solid #e4e2da;border-radius:6px"></div>
<svg style="left:1757px;top:1535px" width="46" height="46" viewBox="0 0 16 16" ><rect x="7.2" y="-0.15" width="1.6" height="1.9" fill="#6aaa2a" transform="rotate(0.0 8 8)"/><rect x="7.2" y="-0.15" width="1.6" height="1.9" fill="#6aaa2a" transform="rotate(22.5 8 8)"/><rect x="7.2" y="-0.15" width="1.6" height="1.9" fill="#6aaa2a" transform="rotate(45.0 8 8)"/><rect x="7.2" y="-0.15" width="1.6" height="1.9" fill="#6aaa2a" transform="rotate(67.5 8 8)"/><rect x="7.2" y="-0.15" width="1.6" height="1.9" fill="#6aaa2a" transform="rotate(90.0 8 8)"/><rect x="7.2" y="-0.15" width="1.6" height="1.9" fill="#6aaa2a" transform="rotate(112.5 8 8)"/><rect x="7.2" y="-0.15" width="1.6" height="1.9" fill="#6aaa2a" transform="rotate(135.0 8 8)"/><rect x="7.2" y="-0.15" width="1.6" height="1.9" fill="#6aaa2a" transform="rotate(157.5 8 8)"/><rect x="7.2" y="-0.15" width="1.6" height="1.9" fill="#6aaa2a" transform="rotate(180.0 8 8)"/><rect x="7.2" y="-0.15" width="1.6" height="1.9" fill="#6aaa2a" transform="rotate(202.5 8 8)"/><rect x="7.2" y="-0.15" width="1.6" height="1.9" fill="#6aaa2a" transform="rotate(225.0 8 8)"/><rect x="7.2" y="-0.15" width="1.6" height="1.9" fill="#6aaa2a" transform="rotate(247.5 8 8)"/><rect x="7.2" y="-0.15" width="1.6" height="1.9" fill="#6aaa2a" transform="rotate(270.0 8 8)"/><rect x="7.2" y="-0.15" width="1.6" height="1.9" fill="#6aaa2a" transform="rotate(292.5 8 8)"/><rect x="7.2" y="-0.15" width="1.6" height="1.9" fill="#6aaa2a" transform="rotate(315.0 8 8)"/><rect x="7.2" y="-0.15" width="1.6" height="1.9" fill="#6aaa2a" transform="rotate(337.5 8 8)"/><circle cx="8" cy="8" r="5.95" fill="none" stroke="#6aaa2a" stroke-width="2.5"/><path d="M9.6 0.6 Q5.2 2.4 3.6 6.6 M14.6 10.6 Q15.4 6 11.8 3.6 M2.4 12.4 Q6.2 15.6 10.4 13.2" fill="none" stroke="#f0efe8" stroke-width="0.75"/></svg>
<div style="left:1822px;top:1524px;width:70px;height:67px;background:#e9aaa9;border-radius:6px"></div>
<svg style="left:1836px;top:1537px" width="42" height="40" viewBox="0 0 42 40" ><rect x="0" y="0" width="42" height="40" rx="8" fill="#fff"/><path d="M21 4 Q30 4 30 15 Q30 19 31.5 22 Q35 28 33 31 Q31.6 31 30.4 29 Q30 33 27 35 Q30 36 30 37.4 Q30 38.6 25 38.6 Q22 38.6 21 37.6 Q20 38.6 17 38.6 Q12 38.6 12 37.4 Q12 36 15 35 Q12 33 11.6 29 Q10.4 31 9 31 Q7 28 10.5 22 Q12 19 12 15 Q12 4 21 4 Z" fill="#111"/><path d="M21 19 Q27 19 27.6 26 Q28 34 21 34.6 Q14 34 14.4 26 Q15 19 21 19 Z" fill="#fff"/><path d="M12.2 20.4 Q21 24 29.8 20.4 L30.6 23.4 Q21 27.4 15.6 25.4 L15 30 L12 29 L12.4 24.4 Q11.4 23.6 11.6 22.4 Z" fill="#e5322d"/><ellipse cx="18" cy="12" rx="2.1" ry="3" fill="#fff"/><ellipse cx="24" cy="12" rx="2.1" ry="3" fill="#fff"/><circle cx="18.6" cy="12.6" r="0.9" fill="#111"/><circle cx="23.4" cy="12.6" r="0.9" fill="#111"/><path d="M16.4 17 Q21 19.4 25.6 17 Q21 15.4 16.4 17 Z" fill="#f5a623"/></svg>
<div style="left:1234.5px;top:1586px;width:11px;height:4px;background:#8c8c8c;border-radius:2px"></div>
<div style="left:1466.5px;top:1586px;width:11px;height:4px;background:#8c8c8c;border-radius:2px"></div>
<div style="left:1542.5px;top:1586px;width:11px;height:4px;background:#8c8c8c;border-radius:2px"></div>
<div style="left:1620.5px;top:1586px;width:11px;height:4px;background:#8c8c8c;border-radius:2px"></div>
<div style="left:1697.5px;top:1586px;width:11px;height:4px;background:#8c8c8c;border-radius:2px"></div>
<div style="left:1766px;top:1587px;width:28px;height:4px;background:#0a6cd6;border-radius:2px"></div>
<div style="left:1851px;top:1587px;width:11px;height:4px;background:#d32f2f;border-radius:2px"></div>
<svg style="left:2013px;top:1551px" width="20" height="12" viewBox="0 0 20 12" ><path d="M1.5 10.5 L10 2 L18.5 10.5" fill="none" stroke="#1f1f1f" stroke-width="2.5"/></svg>
<svg style="left:2064.5px;top:1543px" width="30" height="30" viewBox="0 0 30 30" ><path d="M2.2 13.4 A12 12 0 0 1 25.6 9 M26.4 1.4 V9.6 H18.4" fill="none" stroke="#2a2a2a" stroke-width="1.5"/><path d="M25 19 A12 12 0 0 1 3 20.6 M2.2 28 V20 H10" fill="none" stroke="#2a2a2a" stroke-width="1.5"/><circle cx="22" cy="22" r="6.8" fill="#fb9a0c"/></svg>
<svg style="left:2120.5px;top:1547.5px" width="28" height="22" viewBox="0 0 28 22" ><defs><linearGradient id="gcl2" x1="0" y1="0" x2="0" y2="1"><stop offset="0" stop-color="#ececec"/><stop offset="0.5" stop-color="#c4c4c6"/><stop offset="1" stop-color="#7c7c80"/></linearGradient></defs><path d="M7.6 19 Q1 19 1 13.6 Q1 8.8 6.4 8.4 Q8 3 13.8 3 Q19.6 3 21.2 8.2 Q27 8.4 27 13.8 Q27 19 21.6 19 Z" fill="url(#gcl2)" stroke="#3c3c3c" stroke-width="1.5"/><path d="M5.4 1.2 L25.4 21.4" stroke="#2a2a2a" stroke-width="1.5"/></svg>
<svg style="left:2176.5px;top:1546.5px" width="26" height="21" viewBox="0 0 26 21" ><rect x="1" y="1" width="24" height="18.6" rx="4.4" fill="none" stroke="#262626" stroke-width="1.8"/><path d="M1 13.6 H25 M13 13.6 V19.4" stroke="#262626" stroke-width="1.6"/></svg>
<div class="u" style="left:2232.5px;top:1541.5px;height:32px;line-height:32px;font-size:22.6px;color:#000;"><span class="cj" style="font-size:27px">中</span></div>
<svg style="left:2289px;top:1547px" width="28.4" height="21" viewBox="0 0 28.4 21" ><path d="M1.2 8.4 A18.6 18.6 0 0 1 27.2 8.4" fill="none" stroke="#1f1f1f" stroke-width="1.9" stroke-linecap="round"/><path d="M5.4 12.4 A12.4 12.4 0 0 1 23 12.4" fill="none" stroke="#1f1f1f" stroke-width="1.9" stroke-linecap="round"/><path d="M9.6 16.2 A6.4 6.4 0 0 1 18.8 16.2" fill="none" stroke="#1f1f1f" stroke-width="1.9" stroke-linecap="round"/><circle cx="14.2" cy="18.6" r="2" fill="#1f1f1f"/></svg>
<svg style="left:2330.5px;top:1547.6px" width="29" height="22" viewBox="0 0 29 22" ><path d="M1 7.6 H5.6 L11.6 1.6 V20.4 L5.6 14.4 H1 Z" fill="none" stroke="#1f1f1f" stroke-width="1.7" stroke-linejoin="round"/><path d="M15.2 7.2 Q18 11 15.2 14.8 M19 4.2 Q23.6 11 19 17.8 M22.8 1.2 Q29.6 11 22.8 20.8" fill="none" stroke="#1f1f1f" stroke-width="1.7" stroke-linecap="round"/></svg>
<svg style="left:2372.5px;top:1543.2px" width="29" height="24" viewBox="0 0 29 24" ><path d="M5.4 5 H21.6 Q25.4 5 25.4 8.8 V18.6 Q25.4 22.4 21.6 22.4 H4.6 Q0.9 22.4 0.9 18.6 V11.6" fill="none" stroke="#1f1f1f" stroke-width="1.8"/><path d="M7 7.8 H21 Q22.6 7.8 22.6 9.4 V18 Q22.6 19.6 21 19.6 H5.2 Q3.6 19.6 3.6 18 V13 Z" fill="#1f1f1f"/><path d="M26.8 11 V16.6" stroke="#1f1f1f" stroke-width="2.6" stroke-linecap="round"/><path d="M4.6 0 L1 6.2 H3.8 L1.6 10.6 L7.6 4.4 H4.6 L6.8 0 Z" fill="#1f1f1f"/></svg>
<div class="u" style="left:2476.5px;top:1531.0px;height:26px;line-height:26px;font-size:20.6px;color:#1f1f1f;letter-spacing:-0.31px;">23:35</div>
<div class="u" style="left:2430.5px;top:1558.5px;height:26px;line-height:26px;font-size:20.6px;color:#1f1f1f;letter-spacing:0.484px;">2025/2/26</div>
</body></html>
